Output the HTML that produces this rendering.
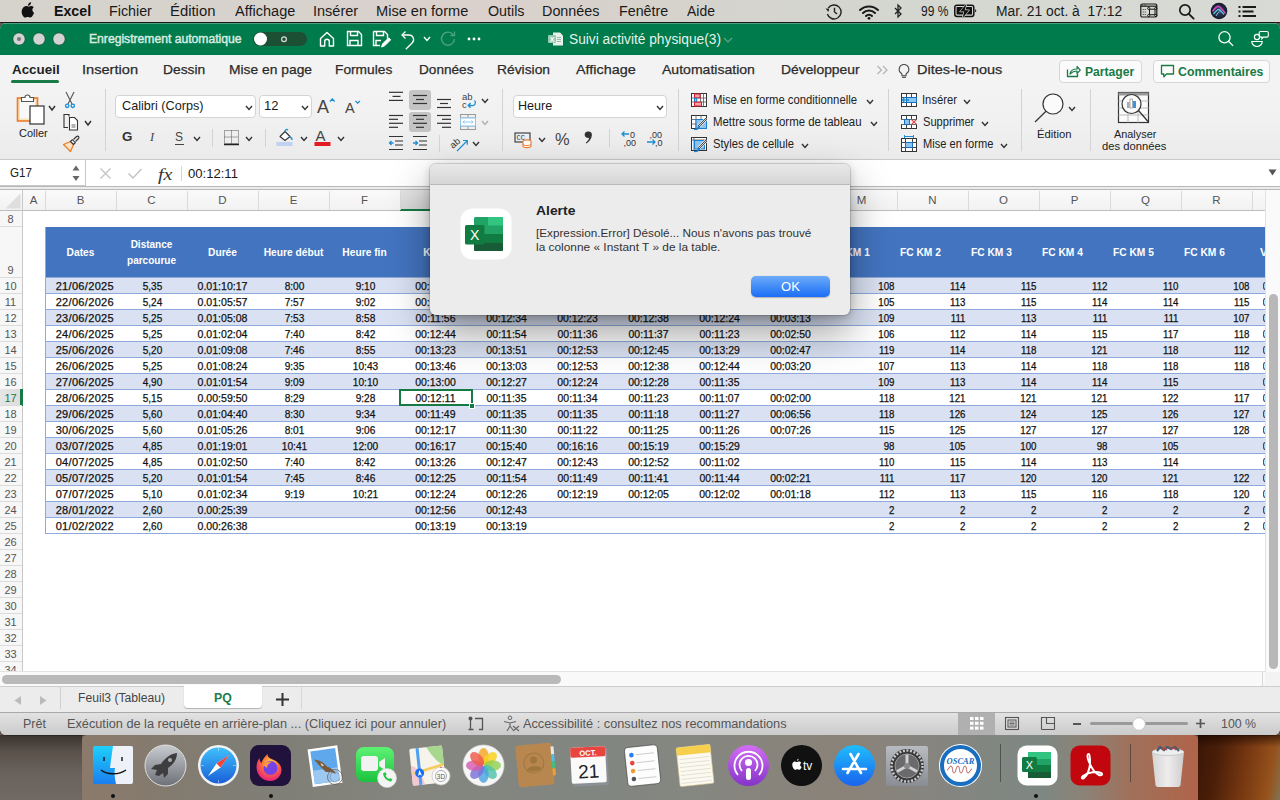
<!DOCTYPE html><html><head><meta charset="utf-8"><style>*{margin:0;padding:0;box-sizing:border-box}html,body{width:1280px;height:800px;overflow:hidden}body{position:relative;font-family:"Liberation Sans",sans-serif;background:#5a4a40}.a{position:absolute;white-space:nowrap}svg.a{overflow:visible}</style></head><body><div class="a" style="left:0px;top:0px;width:1280px;height:800px;background:#6a5a50;"></div><div class="a" style="left:0px;top:735px;width:82px;height:65px;background:linear-gradient(180deg,#3a322d 0%,#5a514b 25%,#6a625c 60%,#716963 100%);"></div><div class="a" style="left:1198px;top:735px;width:82px;height:65px;background:linear-gradient(100deg,#3a1606 0%,#4a1e08 25%,#7a3a12 60%,#95521c 85%,#8a6a40 96%,#707868 100%);"></div><div class="a" style="left:1198px;top:735px;width:82px;height:12px;background:linear-gradient(180deg,rgba(20,5,0,.6),rgba(20,5,0,0));"></div><div class="a" style="left:0px;top:0px;width:1280px;height:22px;background:linear-gradient(90deg,#d5d3cc 0%,#d8d2cd 25%,#dbd0cc 35%,#d6d2cc 50%,#d4d6d0 70%,#d8dad5 100%);"></div><div class="a" style="left:0px;top:22px;width:1280px;height:1px;background:#1e1e1e;"></div><svg class="a" style="left:21.5px;top:1.8px;" width="15" height="17" viewBox="0 0 15 17"><path fill="#111" transform="scale(.88 .92)" d="M10.3 0c.1 1.1-.3 2.1-.9 2.9-.7.8-1.7 1.3-2.6 1.2-.1-1 .4-2.1 1-2.8C8.4.6 9.5.1 10.3 0zM13.5 12.3c-.4 1-.6 1.4-1.1 2.2-.7 1.1-1.7 2.4-2.9 2.4-1.1 0-1.4-.7-2.9-.7s-1.8.7-2.9.7C2.5 16.9 1.5 15.7.8 14.6-1.1 11.6-.5 7.2 2 5.4c.9-.6 2-1 3-1 1.1 0 1.9.7 2.9.7.9 0 1.5-.7 2.9-.7.9 0 1.9.5 2.6 1.3-2.3 1.3-1.9 4.6.1 5.6z"/></svg><div class="a" id="t1" style="left:54.30px;top:3.80px;font-size:14.00px;color:#111;font-weight:700;line-height:1;transform:scaleX(1.0141);transform-origin:0 0;">Excel</div><div class="a" id="t2" style="left:108.68px;top:3.80px;font-size:14.00px;color:#1a1a1a;font-weight:400;line-height:1;transform:scaleX(1.0207);transform-origin:0 0;">Fichier</div><div class="a" id="t3" style="left:170.44px;top:3.80px;font-size:14.00px;color:#1a1a1a;font-weight:400;line-height:1;transform:scaleX(1.0604);transform-origin:0 0;">Édition</div><div class="a" id="t4" style="left:234.80px;top:3.80px;font-size:14.00px;color:#1a1a1a;font-weight:400;line-height:1;transform:scaleX(1.0371);transform-origin:0 0;">Affichage</div><div class="a" id="t5" style="left:312.96px;top:3.80px;font-size:14.00px;color:#1a1a1a;font-weight:400;line-height:1;transform:scaleX(1.0371);transform-origin:0 0;">Insérer</div><div class="a" id="t6" style="left:375.96px;top:3.80px;font-size:14.00px;color:#1a1a1a;font-weight:400;line-height:1;transform:scaleX(1.0408);transform-origin:0 0;">Mise en forme</div><div class="a" id="t7" style="left:487.50px;top:3.80px;font-size:14.00px;color:#1a1a1a;font-weight:400;line-height:1;transform:scaleX(1.0199);transform-origin:0 0;">Outils</div><div class="a" id="t8" style="left:542.47px;top:3.80px;font-size:14.00px;color:#1a1a1a;font-weight:400;line-height:1;transform:scaleX(1.0265);transform-origin:0 0;">Données</div><div class="a" id="t9" style="left:618.68px;top:3.80px;font-size:14.00px;color:#1a1a1a;font-weight:400;line-height:1;transform:scaleX(1.0177);transform-origin:0 0;">Fenêtre</div><div class="a" id="t10" style="left:687.20px;top:3.80px;font-size:14.00px;color:#1a1a1a;font-weight:400;line-height:1;transform:scaleX(0.9952);transform-origin:0 0;">Aide</div><svg class="a" style="left:824px;top:3px;" width="20" height="17" viewBox="0 0 20 17"><g fill="none" stroke="#222" stroke-width="1.4"><path d="M4.2 5.2A7 7 0 1 1 3.4 11"/><path d="M10.5 4.8v4.2l2.6 2"/></g><path d="M1.5 5.5l3.6 0.2-0.6 3.4z" fill="#222"/></svg><svg class="a" style="left:858px;top:3px;" width="22" height="17" viewBox="0 0 22 17"><g fill="none" stroke="#1a1a1a" stroke-width="2" stroke-linecap="round"><path d="M2 7a13 13 0 0 1 18 0"/><path d="M5 10a8.5 8.5 0 0 1 12 0"/><path d="M8 13a4 4 0 0 1 6 0"/></g><circle cx="11" cy="15.3" r="1.4" fill="#1a1a1a"/></svg><svg class="a" style="left:893px;top:3px;" width="11" height="17" viewBox="0 0 11 17"><path d="M2 5l6 6-3 3V2l3 3-6 6" fill="none" stroke="#222" stroke-width="1.3"/></svg><div class="a" id="t11" style="left:921.00px;top:3.80px;font-size:14.00px;color:#1a1a1a;font-weight:400;line-height:1;transform:scaleX(0.8582);transform-origin:0 0;">99 %</div><svg class="a" style="left:953px;top:3px;" width="26" height="16" viewBox="0 0 26 16"><rect x="1.8" y="2.2" width="19" height="11.2" rx="2.2" fill="none" stroke="#111" stroke-width="1.5"/><path d="M22.2 6.3a1.6 1.6 0 0 1 0 3z" fill="#111"/><rect x="3.6" y="4" width="15.4" height="7.6" rx=".6" fill="#111"/><path d="M13.6 .8L7 8.6h4.3L9.4 15.2l6.6-8H11.7z" fill="#111" stroke="#d4d6d0" stroke-width="1.3" stroke-linejoin="round"/><path d="M13.6 .8L7 8.6h4.3L9.4 15.2l6.6-8H11.7z" fill="#111"/></svg><div class="a" id="t12" style="left:995.61px;top:3.80px;font-size:14.00px;color:#1a1a1a;font-weight:400;line-height:1;transform:scaleX(0.9878);transform-origin:0 0;white-space:pre;">Mar. 21 oct. à  17:12</div><svg class="a" style="left:1140px;top:3px;" width="18" height="15" viewBox="0 0 18 15"><rect x=".8" y="1" width="16" height="13" rx="1.5" fill="none" stroke="#1a1a1a" stroke-width="1.2"/><path d="M.8 3.2h16" stroke="#1a1a1a" stroke-width="1.2"/><g fill="#1a1a1a"><circle cx="2.6" cy="2.1" r=".5"/><circle cx="4.2" cy="2.1" r=".5"/><circle cx="5.8" cy="2.1" r=".5"/><circle cx="3.2" cy="6.5" r=".6"/><circle cx="5.2" cy="6.5" r=".6"/><circle cx="3.2" cy="9" r=".6"/><circle cx="5.2" cy="9" r=".6"/><circle cx="3.2" cy="11.5" r=".6"/><circle cx="5.2" cy="11.5" r=".6"/></g><path d="M9.5 6.2h5.5v5.5H9.5zM9.5 6.2a1.2 1.2 0 1 1 0 0M15 6.2a1.2 1.2 0 1 1 0 0" fill="none" stroke="#1a1a1a" stroke-width="1"/><circle cx="8.7" cy="5.4" r="1.1" fill="none" stroke="#1a1a1a" stroke-width="1"/><circle cx="15.8" cy="5.4" r="1.1" fill="none" stroke="#1a1a1a" stroke-width="1"/><circle cx="8.7" cy="12.5" r="1.1" fill="none" stroke="#1a1a1a" stroke-width="1"/><circle cx="15.8" cy="12.5" r="1.1" fill="none" stroke="#1a1a1a" stroke-width="1"/></svg><svg class="a" style="left:1178px;top:3px;" width="17" height="17" viewBox="0 0 17 17"><circle cx="7" cy="7" r="5.2" fill="none" stroke="#1a1a1a" stroke-width="1.7"/><path d="M10.8 10.8l4.8 4.8" stroke="#1a1a1a" stroke-width="1.9" stroke-linecap="round"/></svg><svg class="a" style="left:1210px;top:2px;" width="18" height="18" viewBox="0 0 18 18"><defs><radialGradient id="sg" cx="50%" cy="50%" r="55%"><stop offset="0" stop-color="#3a4a7a"/><stop offset=".7" stop-color="#1c2238"/><stop offset="1" stop-color="#0c0e18"/></radialGradient></defs><circle cx="9" cy="9" r="8.3" fill="url(#sg)"/><path d="M2.5 9.5C5 6 7.5 4 9 4.5s3 3 6.5 7" fill="none" stroke="#e04cc8" stroke-width="1.6" opacity=".9"/><path d="M3.5 12C6 9 7.8 7 9 7.5s2.5 2.5 5 5" fill="none" stroke="#5be0e8" stroke-width="1.4" opacity=".9"/><path d="M6 14c1.5-3 2.5-4 3.5-4" fill="none" stroke="#a0f0ff" stroke-width="1" opacity=".8"/></svg><svg class="a" style="left:1238px;top:5px;" width="20" height="13" viewBox="0 0 20 13"><g fill="#1a1a1a"><rect x=".5" y="1" width="2" height="2"/><rect x=".5" y="5.5" width="2" height="2"/><rect x=".5" y="10" width="2" height="2"/><rect x="4.5" y="1" width="13.5" height="2"/><rect x="4.5" y="5.5" width="11" height="2"/><rect x="4.5" y="10" width="13.5" height="2"/></g></svg><div class="a" style="left:0;top:23px;width:1280px;height:711.5px;background:#f3f3f3;border-radius:6px 6px 6px 6px;overflow:hidden;box-shadow:0 0 0 0.5px rgba(0,0,0,.5)"><div class="a" style="left:0px;top:0px;width:1280px;height:32px;background:#007b4b;"></div><div class="a" style="left:0px;top:0px;width:1280px;height:1px;background:rgba(255,255,255,.3);"></div></div><svg class="a" style="left:12px;top:31.75px;" width="14" height="14" viewBox="0 0 14 14"><circle cx="7" cy="7" r="6" fill="#d3d3d3" stroke="rgba(0,0,0,.35)" stroke-width=".8"/></svg><svg class="a" style="left:32px;top:31.75px;" width="14" height="14" viewBox="0 0 14 14"><circle cx="7" cy="7" r="6" fill="#d3d3d3" stroke="rgba(0,0,0,.35)" stroke-width=".8"/></svg><svg class="a" style="left:52px;top:31.75px;" width="14" height="14" viewBox="0 0 14 14"><circle cx="7" cy="7" r="6" fill="#d3d3d3" stroke="rgba(0,0,0,.35)" stroke-width=".8"/></svg><svg class="a" style="left:12px;top:31.75px;" width="14" height="14" viewBox="0 0 14 14"><circle cx="7" cy="7" r="2" fill="#777"/></svg><div class="a" id="t13" style="left:89.33px;top:32.67px;font-size:12.50px;color:#d9ebe1;font-weight:400;line-height:1;transform:scaleX(0.9713);transform-origin:0 0;-webkit-text-stroke:0.45px #d9ebe1;">Enregistrement automatique</div><div class="a" style="left:253px;top:32px;width:54px;height:14px;background:#1d4f35;border-radius:7px;"></div><svg class="a" style="left:253px;top:32px;" width="16" height="14" viewBox="0 0 16 14"><circle cx="7.5" cy="7" r="6.5" fill="#fff"/></svg><svg class="a" style="left:280px;top:35px;" width="10" height="9" viewBox="0 0 10 9"><ellipse cx="4" cy="4.2" rx="2.4" ry="2.4" fill="none" stroke="#ddd" stroke-width="1.2"/></svg><svg class="a" style="left:318px;top:30px;" width="18" height="18" viewBox="0 0 18 18"><path d="M2.5 8.5L9 2.5l6.5 6v7.5h-4.2v-4.5a2.3 2.3 0 0 0-4.6 0V16H2.5z" fill="none" stroke="#ffffff" stroke-width="1.4" stroke-linejoin="round"/></svg><svg class="a" style="left:346px;top:30px;" width="17" height="17" viewBox="0 0 17 17"><path d="M1.5 1.5h11l3 3v11h-14z" fill="none" stroke="#ffffff" stroke-width="1.4"/><path d="M4.5 1.5v4h7v-4M4 15.5v-5h8v5" fill="none" stroke="#ffffff" stroke-width="1.4"/></svg><svg class="a" style="left:372px;top:30px;" width="19" height="18" viewBox="0 0 19 18"><path d="M1.5 1.5h11l3 3v4M8 15.5H1.5v-14" fill="none" stroke="#ffffff" stroke-width="1.4"/><path d="M4.5 1.5v4h7v-4M4 15.5v-5h5" fill="none" stroke="#ffffff" stroke-width="1.4"/><path d="M9.5 17l1.2-3.2 6-6 2 2-6 6z" fill="#ffffff" stroke="#ffffff" stroke-width="1"/></svg><svg class="a" style="left:400px;top:30px;" width="17" height="20" viewBox="0 0 17 20"><path d="M5.5 1.5L2 5l3.5 3.5" fill="none" stroke="#ffffff" stroke-width="1.3"/><path d="M2 5h7a4.6 4.6 0 0 1 3.3 7.8L5.8 19.3" fill="none" stroke="#ffffff" stroke-width="1.3"/></svg><svg class="a" style="left:423px;top:36px;" width="8" height="5.5" viewBox="0 0 8 5.5"><path d="M1 1l3.0 3.5 3.0 -3.5" fill="none" stroke="#fff" stroke-width="1.3"/></svg><svg class="a" style="left:439px;top:30px;" width="18" height="18" viewBox="0 0 18 18"><path d="M14 4.5A6.5 6.5 0 1 0 15.5 9" fill="none" stroke="rgba(255,255,255,.3)" stroke-width="1.4"/><path d="M15.5 1.5v4h-4" fill="none" stroke="rgba(255,255,255,.3)" stroke-width="1.4"/></svg><svg class="a" style="left:467px;top:37px;" width="14" height="4" viewBox="0 0 14 4"><circle cx="2" cy="2" r="1.4" fill="#fff"/><circle cx="7" cy="2" r="1.4" fill="#fff"/><circle cx="12" cy="2" r="1.4" fill="#fff"/></svg><svg class="a" style="left:548px;top:32px;" width="16" height="14" viewBox="0 0 16 14"><path d="M5 .5h7l3 3v10H5z" fill="#e8f2ec"/><rect x="0" y="3" width="8" height="8" rx="1" fill="#9cc8ad"/><text x="4" y="9.5" font-size="7" font-family="Liberation Sans" font-weight="700" fill="#fff" text-anchor="middle">X</text><path d="M9 5.5h4M9 7.5h4M9 9.5h4" stroke="#8fb8a0" stroke-width=".9"/></svg><div class="a" id="t14" style="left:568.50px;top:32.20px;font-size:14.00px;color:#e6f1ea;font-weight:400;line-height:1;transform:scaleX(0.9819);transform-origin:0 0;">Suivi activité physique(3)</div><svg class="a" style="left:723px;top:37px;" width="10" height="6" viewBox="0 0 10 6"><path d="M1 1l4.0 4 4.0 -4" fill="none" stroke="rgba(255,255,255,.35)" stroke-width="1.2"/></svg><svg class="a" style="left:1216px;top:29px;" width="20" height="20" viewBox="0 0 20 20"><circle cx="8.5" cy="8.3" r="5.6" fill="none" stroke="#fff" stroke-width="1.3"/><path d="M12.5 12.3l4.6 4.6" stroke="#fff" stroke-width="1.3"/></svg><svg class="a" style="left:1249px;top:29px;" width="22" height="20" viewBox="0 0 22 20"><circle cx="8" cy="8" r="2.6" fill="none" stroke="#fff" stroke-width="1.2"/><path d="M2.8 12.5h10.4a5.2 5 0 0 1-10.4 0z" fill="none" stroke="#fff" stroke-width="1.2"/><path d="M11.5 2.5h6.5a1.3 1.3 0 0 1 1.3 1.3v3a1.3 1.3 0 0 1-1.3 1.3h-3.5l-1.7 1.6.2-1.6h-1.5a1.3 1.3 0 0 1-1.3-1.3v-3a1.3 1.3 0 0 1 1.3-1.3z" fill="none" stroke="#fff" stroke-width="1.1"/></svg><div class="a" id="t15" style="left:11.60px;top:62.52px;font-size:13.50px;color:#222;font-weight:700;line-height:1;transform:scaleX(0.9922);transform-origin:0 0;">Accueil</div><div class="a" id="t16" style="left:81.92px;top:62.52px;font-size:13.50px;color:#2b2b2b;font-weight:400;line-height:1;transform:scaleX(1.0821);transform-origin:0 0;-webkit-text-stroke:0.25px #2b2b2b;">Insertion</div><div class="a" id="t17" style="left:162.68px;top:62.52px;font-size:13.50px;color:#2b2b2b;font-weight:400;line-height:1;transform:scaleX(1.0237);transform-origin:0 0;-webkit-text-stroke:0.25px #2b2b2b;">Dessin</div><div class="a" id="t18" style="left:228.68px;top:62.52px;font-size:13.50px;color:#2b2b2b;font-weight:400;line-height:1;transform:scaleX(1.0246);transform-origin:0 0;-webkit-text-stroke:0.25px #2b2b2b;">Mise en page</div><div class="a" id="t19" style="left:335.48px;top:62.52px;font-size:13.50px;color:#2b2b2b;font-weight:400;line-height:1;transform:scaleX(1.0178);transform-origin:0 0;-webkit-text-stroke:0.25px #2b2b2b;">Formules</div><div class="a" id="t20" style="left:418.59px;top:62.52px;font-size:13.50px;color:#2b2b2b;font-weight:400;line-height:1;transform:scaleX(1.0077);transform-origin:0 0;-webkit-text-stroke:0.25px #2b2b2b;">Données</div><div class="a" id="t21" style="left:497.48px;top:62.52px;font-size:13.50px;color:#2b2b2b;font-weight:400;line-height:1;transform:scaleX(1.0246);transform-origin:0 0;-webkit-text-stroke:0.25px #2b2b2b;">Révision</div><div class="a" id="t22" style="left:575.50px;top:62.52px;font-size:13.50px;color:#2b2b2b;font-weight:400;line-height:1;transform:scaleX(1.0660);transform-origin:0 0;-webkit-text-stroke:0.25px #2b2b2b;">Affichage</div><div class="a" id="t23" style="left:661.60px;top:62.52px;font-size:13.50px;color:#2b2b2b;font-weight:400;line-height:1;transform:scaleX(1.0406);transform-origin:0 0;-webkit-text-stroke:0.25px #2b2b2b;">Automatisation</div><div class="a" id="t24" style="left:781.17px;top:62.52px;font-size:13.50px;color:#2b2b2b;font-weight:400;line-height:1;transform:scaleX(1.0269);transform-origin:0 0;-webkit-text-stroke:0.25px #2b2b2b;">Développeur</div><div class="a" id="t25" style="left:916.93px;top:62.52px;font-size:13.50px;color:#2b2b2b;font-weight:400;line-height:1;transform:scaleX(1.0726);transform-origin:0 0;-webkit-text-stroke:0.25px #2b2b2b;">Dites-le-nous</div><div class="a" style="left:11px;top:80px;width:48px;height:3px;background:#187a44;border-radius:2px;"></div><svg class="a" style="left:876px;top:65px;" width="14" height="10" viewBox="0 0 14 10"><path d="M1.5 1l4 4-4 4M7 1l4 4-4 4" fill="none" stroke="#b5b5b5" stroke-width="1.3"/></svg><svg class="a" style="left:897px;top:63px;" width="14" height="16" viewBox="0 0 14 16"><path d="M7 1.5a4.8 4.8 0 0 0-2.8 8.7c.5.4.8 1 .8 1.6v1h4v-1c0-.6.3-1.2.8-1.6A4.8 4.8 0 0 0 7 1.5z" fill="none" stroke="#444" stroke-width="1.1"/><path d="M5 14.3h4" stroke="#444" stroke-width="1.1"/></svg><div class="a" style="left:1058.5px;top:59.5px;width:83px;height:23px;background:#fbfbfb;border:1px solid #d6d6d6;border-radius:4px;"></div><svg class="a" style="left:1066px;top:64px;" width="15" height="14" viewBox="0 0 15 14"><path d="M1.5 5.5v7h10v-2.5" fill="none" stroke="#187a44" stroke-width="1.3"/><path d="M4 10c.5-3.5 3-5 7-5V2.5l3.3 3.6L11 9.5V7c-3 0-5 1-7 3z" fill="none" stroke="#187a44" stroke-width="1.2" stroke-linejoin="round"/></svg><div class="a" id="t26" style="left:1084.70px;top:64.53px;font-size:13.50px;color:#187a44;font-weight:700;line-height:1;transform:scaleX(0.8987);transform-origin:0 0;">Partager</div><div class="a" style="left:1152.5px;top:59.5px;width:117px;height:23px;background:#fbfbfb;border:1px solid #d6d6d6;border-radius:4px;"></div><svg class="a" style="left:1160px;top:64px;" width="15" height="14" viewBox="0 0 15 14"><path d="M1.5 1.5h12v8.5H6.5L3.8 12.8V10H1.5z" fill="none" stroke="#187a44" stroke-width="1.3" stroke-linejoin="round"/></svg><div class="a" id="t27" style="left:1178.00px;top:64.53px;font-size:13.50px;color:#187a44;font-weight:700;line-height:1;transform:scaleX(0.9113);transform-origin:0 0;">Commentaires</div><div class="a" style="left:0px;top:88px;width:1280px;height:71px;background:linear-gradient(#f3f3f3,#f1f1f1 40%,#ebebeb);"></div><div class="a" style="left:0px;top:159px;width:1280px;height:1px;background:#c9c9c9;"></div><div class="a" style="left:104.5px;top:89px;width:1px;height:62px;background:#d3d3d3;"></div><div class="a" style="left:501.5px;top:89px;width:1px;height:62px;background:#d3d3d3;"></div><div class="a" style="left:677.5px;top:89px;width:1px;height:62px;background:#d3d3d3;"></div><div class="a" style="left:887.5px;top:89px;width:1px;height:62px;background:#d3d3d3;"></div><div class="a" style="left:1020.5px;top:89px;width:1px;height:62px;background:#d3d3d3;"></div><div class="a" style="left:1089.5px;top:89px;width:1px;height:62px;background:#d3d3d3;"></div><svg class="a" style="left:14px;top:92px;" width="44" height="34" viewBox="0 0 44 34"><rect x="3.5" y="6" width="20" height="23" fill="#fbe3b8" stroke="#ee7b2a" stroke-width="1.6"/><rect x="6" y="8.5" width="15" height="18" fill="#f8f8f8"/><path d="M7.5 9.5v-4h3.5a2.5 2.5 0 0 1 5 0h3.5v4z" fill="#fff" stroke="#555" stroke-width="1.1"/><rect x="16" y="14" width="14" height="18" fill="#fff" stroke="#333" stroke-width="1.2"/></svg><svg class="a" style="left:48px;top:105px;" width="8" height="6" viewBox="0 0 8 6"><path d="M1 1l3.0 4 3.0 -4" fill="none" stroke="#333" stroke-width="1.5"/></svg><div class="a" id="t28" style="left:19.20px;top:128.12px;font-size:11.50px;color:#222;font-weight:400;line-height:1;transform:scaleX(0.9534);transform-origin:0 0;">Coller</div><svg class="a" style="left:63px;top:91px;" width="14" height="18" viewBox="0 0 14 18"><path d="M3 1l6 12M11 1L5 13" stroke="#555" stroke-width="1.1"/><circle cx="4.2" cy="14.8" r="1.7" fill="none" stroke="#1a8fd6" stroke-width="1.3"/><circle cx="9.8" cy="14.8" r="1.7" fill="none" stroke="#1a8fd6" stroke-width="1.3"/></svg><svg class="a" style="left:62px;top:113px;" width="18" height="18" viewBox="0 0 18 18"><path d="M7 3.5V1.5H2v13h4" fill="none" stroke="#333" stroke-width="1.1"/><path d="M7.5 4.5h5l3 3v9.5h-8z" fill="#fff" stroke="#333" stroke-width="1.1"/><path d="M9.5 12h4M9.5 14h4" stroke="#555" stroke-width=".9"/></svg><svg class="a" style="left:84px;top:120px;" width="8" height="6" viewBox="0 0 8 6"><path d="M1 1l3.0 4 3.0 -4" fill="none" stroke="#333" stroke-width="1.5"/></svg><svg class="a" style="left:62px;top:135px;" width="18" height="17" viewBox="0 0 18 17"><path d="M1.5 9.5l7-3 3 3-3 7z" fill="#fde4c2" stroke="#ee7b2a" stroke-width="1.3" stroke-linejoin="round"/><path d="M8.5 6.5l1.8-1.8 3 3-1.8 1.8z" fill="#fff" stroke="#333" stroke-width="1.1"/><path d="M11.5 4.5l3-3a1.3 1.3 0 0 1 2 2l-3 3" fill="none" stroke="#333" stroke-width="1.1"/></svg><div class="a" style="left:115px;top:94.5px;width:140.5px;height:23px;background:#fff;border:1px solid #d4d4d4;border-radius:4px;"></div><div class="a" id="t29" style="left:121.50px;top:99.25px;font-size:13.00px;color:#1a1a1a;font-weight:400;line-height:1;transform:scaleX(0.9729);transform-origin:0 0;">Calibri (Corps)</div><svg class="a" style="left:245px;top:104.5px;" width="8" height="5.5" viewBox="0 0 8 5.5"><path d="M1 1l3.0 3.5 3.0 -3.5" fill="none" stroke="#333" stroke-width="1.4"/></svg><div class="a" style="left:258.5px;top:94.5px;width:53px;height:23px;background:#fff;border:1px solid #d4d4d4;border-radius:4px;"></div><div class="a" id="t30" style="left:264.00px;top:99.25px;font-size:13.00px;color:#1a1a1a;font-weight:400;line-height:1;">12</div><svg class="a" style="left:301px;top:104.5px;" width="8" height="5.5" viewBox="0 0 8 5.5"><path d="M1 1l3.0 3.5 3.0 -3.5" fill="none" stroke="#333" stroke-width="1.4"/></svg><svg class="a" style="left:317px;top:96px;" width="20" height="18" viewBox="0 0 20 18"><text x="0" y="16.5" font-size="18" font-family="Liberation Sans" fill="#444">A</text><path d="M13 5.5l2.3-2.5 2.3 2.5" fill="none" stroke="#1a8fd6" stroke-width="1.3"/></svg><svg class="a" style="left:345px;top:98px;" width="18" height="16" viewBox="0 0 18 16"><text x="0" y="14.5" font-size="14.5" font-family="Liberation Sans" fill="#444">A</text><path d="M10.5 3l2.2 2.2 2.2-2.2" fill="none" stroke="#1a8fd6" stroke-width="1.3"/></svg><div class="a" id="t31" style="left:121.50px;top:131.18px;font-size:12.50px;color:#333;font-weight:700;line-height:1;transform:scaleX(1.0667);transform-origin:0 0;">G</div><div class="a" id="t32" style="left:150.00px;top:131.18px;font-size:12.50px;color:#444;font-weight:400;line-height:1;transform:scaleX(1.0000);transform-origin:0 0;font-family:'Liberation Serif',serif;font-style:italic;">I</div><div class="a" id="t33" style="left:175.00px;top:131.30px;font-size:12.00px;color:#444;font-weight:400;line-height:1;transform:scaleX(1.0000);transform-origin:0 0;">S</div><div class="a" style="left:175px;top:144px;width:9px;height:1px;background:#444;"></div><svg class="a" style="left:193px;top:136px;" width="8" height="5.5" viewBox="0 0 8 5.5"><path d="M1 1l3.0 3.5 3.0 -3.5" fill="none" stroke="#333" stroke-width="1.4"/></svg><div class="a" style="left:211.5px;top:129px;width:1px;height:18px;background:#d3d3d3;"></div><svg class="a" style="left:223px;top:129px;" width="17" height="17" viewBox="0 0 17 17"><g stroke="#555" stroke-width="1" stroke-dasharray="1 1" fill="none"><rect x="1.5" y="1.5" width="14" height="13"/><path d="M8.5 1.5v13M1.5 8h14"/></g><path d="M1 15.5h15" stroke="#222" stroke-width="1.5"/></svg><svg class="a" style="left:245px;top:136px;" width="8" height="5.5" viewBox="0 0 8 5.5"><path d="M1 1l3.0 3.5 3.0 -3.5" fill="none" stroke="#333" stroke-width="1.4"/></svg><div class="a" style="left:264.5px;top:129px;width:1px;height:18px;background:#d3d3d3;"></div><svg class="a" style="left:276px;top:128px;" width="18" height="19" viewBox="0 0 18 19"><path d="M4 8.5l5-5 5 5-5 4z" fill="#fff" stroke="#333" stroke-width="1.1" stroke-linejoin="round"/><path d="M9 3.5c0-2 2-2.5 3-1.5M13 9c2 0 3 1 3 3" fill="none" stroke="#1a8fd6" stroke-width="1.3"/><rect x="0.5" y="14" width="16" height="4" fill="#c0d2f3"/></svg><svg class="a" style="left:300px;top:136px;" width="8" height="5.5" viewBox="0 0 8 5.5"><path d="M1 1l3.0 3.5 3.0 -3.5" fill="none" stroke="#333" stroke-width="1.4"/></svg><svg class="a" style="left:314px;top:128px;" width="18" height="19" viewBox="0 0 18 19"><text x="1.5" y="12.8" font-size="15" font-family="Liberation Sans" fill="#444">A</text><rect x="0.5" y="14" width="16" height="4" fill="#e51b24"/></svg><svg class="a" style="left:337px;top:136px;" width="8" height="5.5" viewBox="0 0 8 5.5"><path d="M1 1l3.0 3.5 3.0 -3.5" fill="none" stroke="#333" stroke-width="1.4"/></svg><div class="a" style="left:409px;top:90px;width:22px;height:19.5px;background:#c4c4c4;border-radius:3px;"></div><div class="a" style="left:409px;top:112px;width:22px;height:20px;background:#c4c4c4;border-radius:3px;"></div><svg class="a" style="left:388px;top:88px;" width="16" height="46" viewBox="0 0 16 46"><path d="M1 4.3 H15" stroke="#333" stroke-width="1.2"/><path d="M4.5 8.4 H12.5" stroke="#333" stroke-width="1.2"/><path d="M1 12.4 H15" stroke="#333" stroke-width="1.2"/></svg><svg class="a" style="left:412px;top:88px;" width="16" height="46" viewBox="0 0 16 46"><path d="M1 7.5 H15" stroke="#333" stroke-width="1.2"/><path d="M4 11.5 H12" stroke="#333" stroke-width="1.2"/><path d="M1 15.5 H15" stroke="#333" stroke-width="1.2"/></svg><svg class="a" style="left:436px;top:88px;" width="16" height="46" viewBox="0 0 16 46"><path d="M1 11.5 H15" stroke="#333" stroke-width="1.2"/><path d="M4 15.5 H12" stroke="#333" stroke-width="1.2"/><path d="M1 19.5 H15" stroke="#333" stroke-width="1.2"/></svg><svg class="a" style="left:388px;top:88px;" width="16" height="46" viewBox="0 0 16 46"><path d="M1 27.5 H15" stroke="#333" stroke-width="1.2"/><path d="M1 31.3 H10" stroke="#333" stroke-width="1.2"/><path d="M1 35.3 H15" stroke="#333" stroke-width="1.2"/><path d="M1 39.3 H10" stroke="#333" stroke-width="1.2"/></svg><svg class="a" style="left:412px;top:88px;" width="16" height="46" viewBox="0 0 16 46"><path d="M1 27.5 H15" stroke="#333" stroke-width="1.2"/><path d="M4 31.3 H12" stroke="#333" stroke-width="1.2"/><path d="M1 35.3 H15" stroke="#333" stroke-width="1.2"/><path d="M4 39.3 H12" stroke="#333" stroke-width="1.2"/></svg><svg class="a" style="left:436px;top:88px;" width="16" height="46" viewBox="0 0 16 46"><path d="M1 27.5 H15" stroke="#333" stroke-width="1.2"/><path d="M6 31.3 H15" stroke="#333" stroke-width="1.2"/><path d="M1 35.3 H15" stroke="#333" stroke-width="1.2"/><path d="M6 39.3 H15" stroke="#333" stroke-width="1.2"/></svg><svg class="a" style="left:461px;top:92px;" width="18" height="18" viewBox="0 0 18 18"><text x="1" y="8" font-size="9.5" font-family="Liberation Sans" fill="#444">ab</text><text x="1" y="15.5" font-size="9.5" font-family="Liberation Sans" fill="#444">c</text><path d="M13.5 8.5a3 3 0 0 1-3 5H7.5M9.5 11l-2.3 2.5 2.3 2.3" fill="none" stroke="#1a8fd6" stroke-width="1.3"/></svg><svg class="a" style="left:481px;top:98px;" width="8" height="5.5" viewBox="0 0 8 5.5"><path d="M1 1l3.0 3.5 3.0 -3.5" fill="none" stroke="#333" stroke-width="1.4"/></svg><svg class="a" style="left:459px;top:113px;" width="18" height="18" viewBox="0 0 18 18"><rect x="1.5" y="1.5" width="15" height="15" fill="none" stroke="#999" stroke-width="1"/><path d="M1.5 5h15M1.5 13h15M9 1.5v3.5M9 13v3.5" stroke="#999" stroke-width="1"/><rect x="1.5" y="5" width="15" height="8" fill="#fff" stroke="#8cc8ee" stroke-width="1"/><path d="M4 9h10M5.5 7.5L4 9l1.5 1.5M12.5 7.5L14 9l-1.5 1.5" fill="none" stroke="#8cc8ee" stroke-width="1"/></svg><svg class="a" style="left:481px;top:120px;" width="8" height="5.5" viewBox="0 0 8 5.5"><path d="M1 1l3.0 3.5 3.0 -3.5" fill="none" stroke="#b0b0b0" stroke-width="1.4"/></svg><svg class="a" style="left:388px;top:135px;" width="16" height="17" viewBox="0 0 16 17"><path d="M1 1.5h14M7 6h8M7 10h8M1 14.5h14" stroke="#333" stroke-width="1.2"/><path d="M5.5 8H1.5M3.5 6L1.5 8l2 2" fill="none" stroke="#1a8fd6" stroke-width="1.3"/></svg><svg class="a" style="left:412px;top:135px;" width="16" height="17" viewBox="0 0 16 17"><path d="M1 1.5h14M7 6h8M7 10h8M1 14.5h14" stroke="#333" stroke-width="1.2"/><path d="M1 8h4.5M3.5 6l2 2-2 2" fill="none" stroke="#1a8fd6" stroke-width="1.3"/></svg><div class="a" style="left:439px;top:135px;width:1px;height:17px;background:#d3d3d3;"></div><svg class="a" style="left:450px;top:135px;" width="19" height="17" viewBox="0 0 19 17"><text x="0" y="0" font-size="9.5" font-family="Liberation Sans" fill="#333" transform="translate(3 14) rotate(-40)">ab</text><path d="M7 16L17 6M13 5.5h4.3v4.3" fill="none" stroke="#1a8fd6" stroke-width="1.2"/></svg><svg class="a" style="left:472px;top:141px;" width="8" height="5.5" viewBox="0 0 8 5.5"><path d="M1 1l3.0 3.5 3.0 -3.5" fill="none" stroke="#333" stroke-width="1.4"/></svg><div class="a" style="left:512.5px;top:94.5px;width:154px;height:23px;background:#fff;border:1px solid #d4d4d4;border-radius:4px;"></div><div class="a" id="t34" style="left:517.53px;top:99.25px;font-size:13.00px;color:#1a1a1a;font-weight:400;line-height:1;transform:scaleX(0.9656);transform-origin:0 0;">Heure</div><svg class="a" style="left:656px;top:104.5px;" width="8" height="5.5" viewBox="0 0 8 5.5"><path d="M1 1l3.0 3.5 3.0 -3.5" fill="none" stroke="#333" stroke-width="1.4"/></svg><svg class="a" style="left:514px;top:132px;" width="20" height="16" viewBox="0 0 20 16"><rect x="1" y="1" width="15" height="9" fill="none" stroke="#333" stroke-width="1.1"/><text x="2.5" y="8.3" font-size="7" font-family="Liberation Mono" fill="#333">CC</text><ellipse cx="13" cy="9.5" rx="4" ry="1.6" fill="#fff" stroke="#ee7b2a" stroke-width="1.1"/><path d="M9 9.5v4.5c0 .9 1.8 1.6 4 1.6s4-.7 4-1.6V9.5" fill="#fff" stroke="#ee7b2a" stroke-width="1.1"/><path d="M9 12c0 .9 1.8 1.6 4 1.6s4-.7 4-1.6" fill="none" stroke="#ee7b2a" stroke-width="1"/></svg><svg class="a" style="left:538px;top:136.5px;" width="8" height="5.5" viewBox="0 0 8 5.5"><path d="M1 1l3.0 3.5 3.0 -3.5" fill="none" stroke="#333" stroke-width="1.4"/></svg><div class="a" id="t35" style="left:554.50px;top:130.55px;font-size:17.00px;color:#444;font-weight:400;line-height:1;transform:scaleX(0.9667);transform-origin:0 0;">%</div><svg class="a" style="left:583px;top:130px;" width="12" height="17" viewBox="0 0 12 17"><path d="M5.5 1.5a3.3 3.3 0 0 1 3.4 3.8c-.3 3.6-2.6 6.6-5.6 8.2l-.6-.8c2-1.4 3.2-3.1 3.5-4.9A3.3 3.3 0 1 1 5.5 1.5z" fill="#333"/></svg><div class="a" style="left:608.5px;top:129px;width:1px;height:18px;background:#d3d3d3;"></div><svg class="a" style="left:620px;top:129px;" width="18" height="18" viewBox="0 0 18 18"><path d="M9 5H2M4.5 2.5L2 5l2.5 2.5" fill="none" stroke="#1a8fd6" stroke-width="1.3"/><text x="10" y="8.5" font-size="9" font-family="Liberation Sans" fill="#333">0</text><text x="3.5" y="16.5" font-size="9" font-family="Liberation Sans" fill="#333">,00</text></svg><svg class="a" style="left:646px;top:129px;" width="18" height="18" viewBox="0 0 18 18"><text x="3.5" y="8.5" font-size="9" font-family="Liberation Sans" fill="#333">,00</text><path d="M1 13h8M6.5 10.5L9 13l-2.5 2.5" fill="none" stroke="#1a8fd6" stroke-width="1.3"/><text x="9" y="16.5" font-size="9" font-family="Liberation Sans" fill="#333">,0</text></svg><svg class="a" style="left:690px;top:92px;" width="18" height="16" viewBox="0 0 18 16"><rect x="1.5" y="1.5" width="15" height="13" fill="#fff" stroke="#333" stroke-width="1"/><path d="M4.5 1.5v13M10.5 1.5v13M13.5 1.5v13M1.5 6h15M1.5 10h15" stroke="#555" stroke-width=".8"/><rect x="4.5" y="2" width="5.5" height="3.8" fill="#f4a0a8" stroke="#e0202c" stroke-width="1"/><rect x="4.5" y="6.2" width="2.2" height="3.6" fill="#8cc4f0" stroke="#1a7fd0" stroke-width="1"/><rect x="4.5" y="10.2" width="7" height="3.8" fill="#f4a0a8" stroke="#e0202c" stroke-width="1"/></svg><svg class="a" style="left:690px;top:114px;" width="18" height="17" viewBox="0 0 18 17"><rect x="1.5" y="1.5" width="15" height="13" fill="#fff" stroke="#333" stroke-width="1"/><path d="M6 1.5v13M11 1.5v13M1.5 5.5h15M1.5 10h15" stroke="#555" stroke-width=".8"/><rect x="6" y="5.5" width="10.5" height="9" fill="#8cc4f0" stroke="#1a7fd0" stroke-width="1"/><path d="M8.5 12.5L16.5 4.5" stroke="#fff" stroke-width="3.2"/><path d="M8.5 12.5L16.5 4.5" stroke="#333" stroke-width="2" /><path d="M8.6 12.4L16.4 4.6" stroke="#fff" stroke-width=".8"/><path d="M4 15.5c2 0 3.5-.5 4.5-3l1 1c-1 2-3 2.5-5.5 2z" fill="#1a7fd0" stroke="#1a7fd0" stroke-width=".8"/></svg><svg class="a" style="left:690px;top:136px;" width="18" height="17" viewBox="0 0 18 17"><rect x="1.5" y="1.5" width="15" height="13" fill="#fff" stroke="#333" stroke-width="1"/><path d="M4 1.5v13M1.5 4h15" stroke="#555" stroke-width=".8"/><rect x="4.5" y="4.5" width="10" height="8.5" fill="#8cc4f0" stroke="#1a7fd0" stroke-width="1"/><path d="M8.5 12.5L16.5 4.5" stroke="#fff" stroke-width="3.2"/><path d="M8.5 12.5L16.5 4.5" stroke="#333" stroke-width="2"/><path d="M8.6 12.4L16.4 4.6" stroke="#fff" stroke-width=".8"/><path d="M4 15.5c2 0 3.5-.5 4.5-3l1 1c-1 2-3 2.5-5.5 2z" fill="#1a7fd0" stroke="#1a7fd0" stroke-width=".8"/></svg><div class="a" id="t36" style="left:713.40px;top:93.80px;font-size:12.00px;color:#222;font-weight:400;line-height:1;transform:scaleX(0.9427);transform-origin:0 0;">Mise en forme conditionnelle</div><svg class="a" style="left:866px;top:99px;" width="8" height="5.5" viewBox="0 0 8 5.5"><path d="M1 1l3.0 3.5 3.0 -3.5" fill="none" stroke="#333" stroke-width="1.4"/></svg><div class="a" id="t37" style="left:713.40px;top:115.80px;font-size:12.00px;color:#222;font-weight:400;line-height:1;transform:scaleX(0.9517);transform-origin:0 0;">Mettre sous forme de tableau</div><svg class="a" style="left:870px;top:121px;" width="8" height="5.5" viewBox="0 0 8 5.5"><path d="M1 1l3.0 3.5 3.0 -3.5" fill="none" stroke="#333" stroke-width="1.4"/></svg><div class="a" id="t38" style="left:713.40px;top:137.80px;font-size:12.00px;color:#222;font-weight:400;line-height:1;transform:scaleX(0.9352);transform-origin:0 0;">Styles de cellule</div><svg class="a" style="left:801px;top:143px;" width="8" height="5.5" viewBox="0 0 8 5.5"><path d="M1 1l3.0 3.5 3.0 -3.5" fill="none" stroke="#333" stroke-width="1.4"/></svg><svg class="a" style="left:900px;top:92px;" width="18" height="16" viewBox="0 0 18 16"><rect x="1.5" y="1.5" width="15" height="13" fill="#fff" stroke="#333" stroke-width="1"/><path d="M6.5 1.5v13M11.5 1.5v13M1.5 5.5h15M1.5 10.5h15" stroke="#444" stroke-width="1"/><rect x="6.5" y="5.5" width="10" height="5" fill="#8cc4f0" stroke="#1a6fc0" stroke-width="1"/><path d="M9 8H2.5M5 5.3L2.3 8 5 10.7" fill="none" stroke="#1a8fd6" stroke-width="1.3"/></svg><svg class="a" style="left:900px;top:114px;" width="18" height="16" viewBox="0 0 18 16"><rect x="1.5" y="1.5" width="15" height="13" fill="#fff" stroke="#333" stroke-width="1"/><path d="M6.5 1.5v13M11.5 1.5v13M1.5 5.5h15M1.5 10.5h15" stroke="#444" stroke-width="1"/><rect x="0" y="5.8" width="18" height="4.4" fill="#f3f3f3"/><rect x="4.5" y="5.5" width="5" height="5" fill="#8cc4f0" stroke="#1a6fc0" stroke-width="1"/><path d="M11.8 5.8l4.4 4.4M16.2 5.8l-4.4 4.4" stroke="#e8404a" stroke-width="1.1"/></svg><svg class="a" style="left:900px;top:135px;" width="18" height="18" viewBox="0 0 18 18"><rect x="1.5" y="3.5" width="15" height="13" fill="#fff" stroke="#333" stroke-width="1"/><path d="M5.5 3.5v13M12.5 3.5v13M1.5 7.5h15M1.5 12.5h15" stroke="#444" stroke-width="1"/><rect x="5.5" y="7.5" width="7" height="5" fill="#8cc4f0" stroke="#1a6fc0" stroke-width="1"/><rect x="0" y="0" width="18" height="3" fill="#f1f1f1"/><path d="M4.5 1.5h9M4.5 0v3M13.5 0v3" stroke="#1a8fd6" stroke-width="1"/></svg><div class="a" id="t39" style="left:922.46px;top:93.80px;font-size:12.00px;color:#222;font-weight:400;line-height:1;transform:scaleX(0.9353);transform-origin:0 0;">Insérer</div><svg class="a" style="left:963px;top:99px;" width="8" height="5.5" viewBox="0 0 8 5.5"><path d="M1 1l3.0 3.5 3.0 -3.5" fill="none" stroke="#333" stroke-width="1.4"/></svg><div class="a" id="t40" style="left:923.40px;top:115.80px;font-size:12.00px;color:#222;font-weight:400;line-height:1;transform:scaleX(0.9267);transform-origin:0 0;">Supprimer</div><svg class="a" style="left:981px;top:121px;" width="8" height="5.5" viewBox="0 0 8 5.5"><path d="M1 1l3.0 3.5 3.0 -3.5" fill="none" stroke="#333" stroke-width="1.4"/></svg><div class="a" id="t41" style="left:923.40px;top:137.80px;font-size:12.00px;color:#222;font-weight:400;line-height:1;transform:scaleX(0.9247);transform-origin:0 0;">Mise en forme</div><svg class="a" style="left:1000px;top:143px;" width="8" height="5.5" viewBox="0 0 8 5.5"><path d="M1 1l3.0 3.5 3.0 -3.5" fill="none" stroke="#333" stroke-width="1.4"/></svg><svg class="a" style="left:1034px;top:93px;" width="32" height="32" viewBox="0 0 32 32"><circle cx="19" cy="11" r="10" fill="#fbfbfb" stroke="#333" stroke-width="1.2"/><path d="M12 18.2L1 29" stroke="#333" stroke-width="1.2"/></svg><svg class="a" style="left:1068px;top:105.5px;" width="8" height="5.5" viewBox="0 0 8 5.5"><path d="M1 1l3.0 3.5 3.0 -3.5" fill="none" stroke="#333" stroke-width="1.4"/></svg><div class="a" id="t42" style="left:1037.30px;top:129.22px;font-size:11.50px;color:#222;font-weight:400;line-height:1;transform:scaleX(0.9779);transform-origin:0 0;">Édition</div><svg class="a" style="left:1117px;top:91px;" width="34" height="34" viewBox="0 0 34 34"><rect x="1.5" y="1.5" width="30" height="30" fill="#fbfbfb" stroke="#333" stroke-width="1.2"/><rect x="1.5" y="1.5" width="30" height="3" fill="#999"/><path d="M1.5 10h30M1.5 17h30M1.5 24h30M11 4.5v27M21 4.5v27" stroke="#bbb" stroke-width="1"/><circle cx="14.5" cy="13" r="9.5" fill="#fbfbfb" stroke="#333" stroke-width="1.2"/><rect x="10" y="11" width="2.5" height="6" fill="#aaa"/><rect x="13" y="8" width="2.5" height="9" fill="#fff" stroke="#777" stroke-width=".6"/><rect x="16" y="10" width="3" height="7" fill="#3b94e0"/><path d="M21.5 19.5l9.5 11" stroke="#333" stroke-width="1.3"/></svg><div class="a" id="t43" style="left:1113.50px;top:129.22px;font-size:11.50px;color:#222;font-weight:400;line-height:1;transform:scaleX(0.9463);transform-origin:0 0;">Analyser</div><div class="a" id="t44" style="left:1102.00px;top:140.72px;font-size:11.50px;color:#222;font-weight:400;line-height:1;transform:scaleX(0.9756);transform-origin:0 0;">des données</div><div class="a" style="left:0px;top:160px;width:1280px;height:26px;background:#fff;"></div><div class="a" style="left:0px;top:160px;width:86px;height:26px;background:#fff;border:1px solid #c8c8c8;border-left:none;border-top:none;"></div><div class="a" id="t45" style="left:10.00px;top:167.38px;font-size:12.50px;color:#222;font-weight:400;line-height:1;transform:scaleX(0.9293);transform-origin:0 0;">G17</div><svg class="a" style="left:71px;top:163px;" width="10" height="20" viewBox="0 0 10 20"><path d="M1.5 7.5l3.5-5 3.5 5z" fill="#666"/><path d="M1.5 13l3.5 5 3.5-5z" fill="#666"/></svg><svg class="a" style="left:99px;top:167px;" width="13" height="13" viewBox="0 0 13 13"><path d="M1.5 1.5l10 10M11.5 1.5l-10 10" stroke="#c4c4c4" stroke-width="1.4"/></svg><svg class="a" style="left:127px;top:167px;" width="16" height="13" viewBox="0 0 16 13"><path d="M1.5 6.5l4.5 4.5 8.5-9" fill="none" stroke="#c4c4c4" stroke-width="1.5"/></svg><div class="a" id="t46" style="left:158.00px;top:165.55px;font-size:17.00px;color:#333;font-weight:400;line-height:1;transform:scaleX(1.1790);transform-origin:0 0;font-family:'Liberation Serif',serif;font-style:italic;">fx</div><div class="a" style="left:180.5px;top:166px;width:1px;height:15px;background:#d6d6d6;"></div><div class="a" id="t47" style="left:188.00px;top:167.88px;font-size:12.50px;color:#1a1a1a;font-weight:400;line-height:1;transform:scaleX(1.0465);transform-origin:0 0;">00:12:11</div><svg class="a" style="left:1268px;top:169px;" width="9" height="7" viewBox="0 0 9 7"><path d="M.5.5h8L4.5 6.5z" fill="#555"/></svg><div class="a" style="left:0px;top:186px;width:1280px;height:1px;background:#b8b8b8;"></div><div class="a" style="left:0px;top:187px;width:1280px;height:1.5px;background:#ececec;"></div><div class="a" style="left:0px;top:188.5px;width:1280px;height:1px;background:#b8b8b8;"></div><div class="a" style="left:0px;top:189.5px;width:1265px;height:20.5px;background:linear-gradient(#fafafa,#f2f2f2);"></div><div class="a" style="left:0px;top:210px;width:1265px;height:1px;background:#bdbdbd;"></div><div class="a" style="left:22px;top:189.5px;width:1px;height:21px;background:#c8c8c8;"></div><svg class="a" style="left:4px;top:192px;" width="18" height="17" viewBox="0 0 18 17"><path d="M16.5 1.5V16.5H1.5z" fill="#dedede"/></svg><div class="a" style="left:400px;top:189.5px;width:71px;height:20.5px;background:linear-gradient(#e4e4e4,#d8d8d8);"></div><div class="a" style="left:400px;top:209px;width:71px;height:2px;background:#157a43;"></div><div class="a" style="left:22px;top:192.5px;width:23px;text-align:center;font-size:11.5px;line-height:14px;color:#555">A</div><div class="a" style="left:45px;top:191px;width:1px;height:19px;background:#dadada;"></div><div class="a" style="left:45px;top:192.5px;width:71px;text-align:center;font-size:11.5px;line-height:14px;color:#555">B</div><div class="a" style="left:116px;top:191px;width:1px;height:19px;background:#dadada;"></div><div class="a" style="left:116px;top:192.5px;width:71px;text-align:center;font-size:11.5px;line-height:14px;color:#555">C</div><div class="a" style="left:187px;top:191px;width:1px;height:19px;background:#dadada;"></div><div class="a" style="left:187px;top:192.5px;width:71px;text-align:center;font-size:11.5px;line-height:14px;color:#555">D</div><div class="a" style="left:258px;top:191px;width:1px;height:19px;background:#dadada;"></div><div class="a" style="left:258px;top:192.5px;width:71px;text-align:center;font-size:11.5px;line-height:14px;color:#555">E</div><div class="a" style="left:329px;top:191px;width:1px;height:19px;background:#dadada;"></div><div class="a" style="left:329px;top:192.5px;width:71px;text-align:center;font-size:11.5px;line-height:14px;color:#555">F</div><div class="a" style="left:400px;top:191px;width:1px;height:19px;background:#dadada;"></div><div class="a" style="left:400px;top:192.5px;width:71px;text-align:center;font-size:11.5px;line-height:14px;color:#157a43">G</div><div class="a" style="left:471px;top:191px;width:1px;height:19px;background:#dadada;"></div><div class="a" style="left:471px;top:192.5px;width:71px;text-align:center;font-size:11.5px;line-height:14px;color:#555">H</div><div class="a" style="left:542px;top:191px;width:1px;height:19px;background:#dadada;"></div><div class="a" style="left:542px;top:192.5px;width:71px;text-align:center;font-size:11.5px;line-height:14px;color:#555">I</div><div class="a" style="left:613px;top:191px;width:1px;height:19px;background:#dadada;"></div><div class="a" style="left:613px;top:192.5px;width:71px;text-align:center;font-size:11.5px;line-height:14px;color:#555">J</div><div class="a" style="left:684px;top:191px;width:1px;height:19px;background:#dadada;"></div><div class="a" style="left:684px;top:192.5px;width:71px;text-align:center;font-size:11.5px;line-height:14px;color:#555">K</div><div class="a" style="left:755px;top:191px;width:1px;height:19px;background:#dadada;"></div><div class="a" style="left:755px;top:192.5px;width:71px;text-align:center;font-size:11.5px;line-height:14px;color:#555">L</div><div class="a" style="left:826px;top:191px;width:1px;height:19px;background:#dadada;"></div><div class="a" style="left:826px;top:192.5px;width:71px;text-align:center;font-size:11.5px;line-height:14px;color:#555">M</div><div class="a" style="left:897px;top:191px;width:1px;height:19px;background:#dadada;"></div><div class="a" style="left:897px;top:192.5px;width:71px;text-align:center;font-size:11.5px;line-height:14px;color:#555">N</div><div class="a" style="left:968px;top:191px;width:1px;height:19px;background:#dadada;"></div><div class="a" style="left:968px;top:192.5px;width:71px;text-align:center;font-size:11.5px;line-height:14px;color:#555">O</div><div class="a" style="left:1039px;top:191px;width:1px;height:19px;background:#dadada;"></div><div class="a" style="left:1039px;top:192.5px;width:71px;text-align:center;font-size:11.5px;line-height:14px;color:#555">P</div><div class="a" style="left:1110px;top:191px;width:1px;height:19px;background:#dadada;"></div><div class="a" style="left:1110px;top:192.5px;width:71px;text-align:center;font-size:11.5px;line-height:14px;color:#555">Q</div><div class="a" style="left:1181px;top:191px;width:1px;height:19px;background:#dadada;"></div><div class="a" style="left:1181px;top:192.5px;width:71px;text-align:center;font-size:11.5px;line-height:14px;color:#555">R</div><div class="a" style="left:1252px;top:191px;width:1px;height:19px;background:#dadada;"></div><div class="a" style="left:1252px;top:191px;width:1px;height:19px;background:#dadada;"></div><div class="a" style="left:0px;top:211px;width:1265px;height:460px;background:#fff;"></div><div class="a" style="left:0px;top:211px;width:22px;height:460px;background:#f7f7f7;"></div><div class="a" style="left:22px;top:211px;width:1px;height:460px;background:#c8c8c8;"></div><div class="a" style="left:0px;top:226px;width:22px;height:1px;background:#dcdcdc;"></div><div class="a" style="left:0;top:211.5px;width:21px;text-align:center;font-size:11px;line-height:14px;color:#555">8</div><div class="a" style="left:0px;top:277px;width:22px;height:1px;background:#dcdcdc;"></div><div class="a" style="left:0;top:262.5px;width:21px;text-align:center;font-size:11px;line-height:14px;color:#555">9</div><div class="a" style="left:0px;top:293px;width:22px;height:1px;background:#dcdcdc;"></div><div class="a" style="left:0;top:278.5px;width:21px;text-align:center;font-size:11px;line-height:14px;color:#555">10</div><div class="a" style="left:0px;top:309px;width:22px;height:1px;background:#dcdcdc;"></div><div class="a" style="left:0;top:294.5px;width:21px;text-align:center;font-size:11px;line-height:14px;color:#555">11</div><div class="a" style="left:0px;top:325px;width:22px;height:1px;background:#dcdcdc;"></div><div class="a" style="left:0;top:310.5px;width:21px;text-align:center;font-size:11px;line-height:14px;color:#555">12</div><div class="a" style="left:0px;top:341px;width:22px;height:1px;background:#dcdcdc;"></div><div class="a" style="left:0;top:326.5px;width:21px;text-align:center;font-size:11px;line-height:14px;color:#555">13</div><div class="a" style="left:0px;top:357px;width:22px;height:1px;background:#dcdcdc;"></div><div class="a" style="left:0;top:342.5px;width:21px;text-align:center;font-size:11px;line-height:14px;color:#555">14</div><div class="a" style="left:0px;top:373px;width:22px;height:1px;background:#dcdcdc;"></div><div class="a" style="left:0;top:358.5px;width:21px;text-align:center;font-size:11px;line-height:14px;color:#555">15</div><div class="a" style="left:0px;top:389px;width:22px;height:1px;background:#dcdcdc;"></div><div class="a" style="left:0;top:374.5px;width:21px;text-align:center;font-size:11px;line-height:14px;color:#555">16</div><div class="a" style="left:0px;top:389px;width:22px;height:17px;background:linear-gradient(90deg,#e6e6e6,#dcdcdc);"></div><div class="a" style="left:20px;top:389px;width:2.5px;height:17px;background:#157a43;"></div><div class="a" style="left:0px;top:405px;width:22px;height:1px;background:#dcdcdc;"></div><div class="a" style="left:0;top:390.5px;width:21px;text-align:center;font-size:11px;line-height:14px;color:#157a43">17</div><div class="a" style="left:0px;top:421px;width:22px;height:1px;background:#dcdcdc;"></div><div class="a" style="left:0;top:406.5px;width:21px;text-align:center;font-size:11px;line-height:14px;color:#555">18</div><div class="a" style="left:0px;top:437px;width:22px;height:1px;background:#dcdcdc;"></div><div class="a" style="left:0;top:422.5px;width:21px;text-align:center;font-size:11px;line-height:14px;color:#555">19</div><div class="a" style="left:0px;top:453px;width:22px;height:1px;background:#dcdcdc;"></div><div class="a" style="left:0;top:438.5px;width:21px;text-align:center;font-size:11px;line-height:14px;color:#555">20</div><div class="a" style="left:0px;top:469px;width:22px;height:1px;background:#dcdcdc;"></div><div class="a" style="left:0;top:454.5px;width:21px;text-align:center;font-size:11px;line-height:14px;color:#555">21</div><div class="a" style="left:0px;top:485px;width:22px;height:1px;background:#dcdcdc;"></div><div class="a" style="left:0;top:470.5px;width:21px;text-align:center;font-size:11px;line-height:14px;color:#555">22</div><div class="a" style="left:0px;top:501px;width:22px;height:1px;background:#dcdcdc;"></div><div class="a" style="left:0;top:486.5px;width:21px;text-align:center;font-size:11px;line-height:14px;color:#555">23</div><div class="a" style="left:0px;top:517px;width:22px;height:1px;background:#dcdcdc;"></div><div class="a" style="left:0;top:502.5px;width:21px;text-align:center;font-size:11px;line-height:14px;color:#555">24</div><div class="a" style="left:0px;top:533px;width:22px;height:1px;background:#dcdcdc;"></div><div class="a" style="left:0;top:518.5px;width:21px;text-align:center;font-size:11px;line-height:14px;color:#555">25</div><div class="a" style="left:0px;top:549px;width:22px;height:1px;background:#dcdcdc;"></div><div class="a" style="left:0;top:534.5px;width:21px;text-align:center;font-size:11px;line-height:14px;color:#555">26</div><div class="a" style="left:0px;top:565px;width:22px;height:1px;background:#dcdcdc;"></div><div class="a" style="left:0;top:550.5px;width:21px;text-align:center;font-size:11px;line-height:14px;color:#555">27</div><div class="a" style="left:0px;top:581px;width:22px;height:1px;background:#dcdcdc;"></div><div class="a" style="left:0;top:566.5px;width:21px;text-align:center;font-size:11px;line-height:14px;color:#555">28</div><div class="a" style="left:0px;top:597px;width:22px;height:1px;background:#dcdcdc;"></div><div class="a" style="left:0;top:582.5px;width:21px;text-align:center;font-size:11px;line-height:14px;color:#555">29</div><div class="a" style="left:0px;top:613px;width:22px;height:1px;background:#dcdcdc;"></div><div class="a" style="left:0;top:598.5px;width:21px;text-align:center;font-size:11px;line-height:14px;color:#555">30</div><div class="a" style="left:0px;top:629px;width:22px;height:1px;background:#dcdcdc;"></div><div class="a" style="left:0;top:614.5px;width:21px;text-align:center;font-size:11px;line-height:14px;color:#555">31</div><div class="a" style="left:0px;top:645px;width:22px;height:1px;background:#dcdcdc;"></div><div class="a" style="left:0;top:630.5px;width:21px;text-align:center;font-size:11px;line-height:14px;color:#555">32</div><div class="a" style="left:0px;top:661px;width:22px;height:1px;background:#dcdcdc;"></div><div class="a" style="left:0;top:646.5px;width:21px;text-align:center;font-size:11px;line-height:14px;color:#555">33</div><div class="a" style="left:0;top:662.5px;width:21px;text-align:center;font-size:11px;line-height:14px;color:#555">34</div><div class="a" style="left:45px;top:227px;width:1220px;height:50px;background:#4374bf;"></div><div class="a" style="left:45px;top:277px;width:1220px;height:1px;background:#8fa9d6;"></div><div class="a" style="left:45px;top:278px;width:1220px;height:15px;background:#d9e1f2;"></div><div class="a" style="left:45px;top:293px;width:1220px;height:1px;background:#8ea9db;"></div><div class="a" style="left:45px;top:294px;width:1220px;height:15px;background:#fff;"></div><div class="a" style="left:45px;top:309px;width:1220px;height:1px;background:#8ea9db;"></div><div class="a" style="left:45px;top:310px;width:1220px;height:15px;background:#d9e1f2;"></div><div class="a" style="left:45px;top:325px;width:1220px;height:1px;background:#8ea9db;"></div><div class="a" style="left:45px;top:326px;width:1220px;height:15px;background:#fff;"></div><div class="a" style="left:45px;top:341px;width:1220px;height:1px;background:#8ea9db;"></div><div class="a" style="left:45px;top:342px;width:1220px;height:15px;background:#d9e1f2;"></div><div class="a" style="left:45px;top:357px;width:1220px;height:1px;background:#8ea9db;"></div><div class="a" style="left:45px;top:358px;width:1220px;height:15px;background:#fff;"></div><div class="a" style="left:45px;top:373px;width:1220px;height:1px;background:#8ea9db;"></div><div class="a" style="left:45px;top:374px;width:1220px;height:15px;background:#d9e1f2;"></div><div class="a" style="left:45px;top:389px;width:1220px;height:1px;background:#8ea9db;"></div><div class="a" style="left:45px;top:390px;width:1220px;height:15px;background:#fff;"></div><div class="a" style="left:45px;top:405px;width:1220px;height:1px;background:#8ea9db;"></div><div class="a" style="left:45px;top:406px;width:1220px;height:15px;background:#d9e1f2;"></div><div class="a" style="left:45px;top:421px;width:1220px;height:1px;background:#8ea9db;"></div><div class="a" style="left:45px;top:422px;width:1220px;height:15px;background:#fff;"></div><div class="a" style="left:45px;top:437px;width:1220px;height:1px;background:#8ea9db;"></div><div class="a" style="left:45px;top:438px;width:1220px;height:15px;background:#d9e1f2;"></div><div class="a" style="left:45px;top:453px;width:1220px;height:1px;background:#8ea9db;"></div><div class="a" style="left:45px;top:454px;width:1220px;height:15px;background:#fff;"></div><div class="a" style="left:45px;top:469px;width:1220px;height:1px;background:#8ea9db;"></div><div class="a" style="left:45px;top:470px;width:1220px;height:15px;background:#d9e1f2;"></div><div class="a" style="left:45px;top:485px;width:1220px;height:1px;background:#8ea9db;"></div><div class="a" style="left:45px;top:486px;width:1220px;height:15px;background:#fff;"></div><div class="a" style="left:45px;top:501px;width:1220px;height:1px;background:#8ea9db;"></div><div class="a" style="left:45px;top:502px;width:1220px;height:15px;background:#d9e1f2;"></div><div class="a" style="left:45px;top:517px;width:1220px;height:1px;background:#8ea9db;"></div><div class="a" style="left:45px;top:518px;width:1220px;height:15px;background:#fff;"></div><div class="a" style="left:45px;top:533px;width:1220px;height:1px;background:#8ea9db;"></div><div class="a" style="left:45px;top:227px;width:1px;height:307px;background:#8ea9db;"></div><div class="a" style="left:45px;top:244.5px;width:71px;text-align:center;font-size:11px;line-height:14px;color:#fff;font-weight:700;transform:scaleX(.93)">Dates</div><div class="a" style="left:187px;top:244.5px;width:71px;text-align:center;font-size:11px;line-height:14px;color:#fff;font-weight:700;transform:scaleX(.93)">Durée</div><div class="a" style="left:258px;top:244.5px;width:71px;text-align:center;font-size:11px;line-height:14px;color:#fff;font-weight:700;transform:scaleX(.93)">Heure début</div><div class="a" style="left:329px;top:244.5px;width:71px;text-align:center;font-size:11px;line-height:14px;color:#fff;font-weight:700;transform:scaleX(.93)">Heure fin</div><div class="a" style="left:116px;top:236px;width:71px;text-align:center;font-size:11px;line-height:16px;color:#fff;font-weight:700;white-space:normal;transform:scaleX(.91)">Distance<br>parcourue</div><div class="a" style="left:400px;top:244.5px;width:71px;text-align:center;font-size:11px;line-height:14px;color:#fff;font-weight:700;transform:scaleX(.93)">KM 1</div><div class="a" style="left:471px;top:244.5px;width:71px;text-align:center;font-size:11px;line-height:14px;color:#fff;font-weight:700;transform:scaleX(.93)">KM 2</div><div class="a" style="left:542px;top:244.5px;width:71px;text-align:center;font-size:11px;line-height:14px;color:#fff;font-weight:700;transform:scaleX(.93)">KM 3</div><div class="a" style="left:613px;top:244.5px;width:71px;text-align:center;font-size:11px;line-height:14px;color:#fff;font-weight:700;transform:scaleX(.93)">KM 4</div><div class="a" style="left:684px;top:244.5px;width:71px;text-align:center;font-size:11px;line-height:14px;color:#fff;font-weight:700;transform:scaleX(.93)">KM 5</div><div class="a" style="left:755px;top:244.5px;width:71px;text-align:center;font-size:11px;line-height:14px;color:#fff;font-weight:700;transform:scaleX(.93)">KM 6</div><div class="a" style="left:829px;top:244.5px;font-size:11px;line-height:14px;color:#fff;font-weight:700;transform:scaleX(.93);transform-origin:0 0">FC KM 1</div><div class="a" style="left:900px;top:244.5px;font-size:11px;line-height:14px;color:#fff;font-weight:700;transform:scaleX(.93);transform-origin:0 0">FC KM 2</div><div class="a" style="left:971px;top:244.5px;font-size:11px;line-height:14px;color:#fff;font-weight:700;transform:scaleX(.93);transform-origin:0 0">FC KM 3</div><div class="a" style="left:1042px;top:244.5px;font-size:11px;line-height:14px;color:#fff;font-weight:700;transform:scaleX(.93);transform-origin:0 0">FC KM 4</div><div class="a" style="left:1113px;top:244.5px;font-size:11px;line-height:14px;color:#fff;font-weight:700;transform:scaleX(.93);transform-origin:0 0">FC KM 5</div><div class="a" style="left:1184px;top:244.5px;font-size:11px;line-height:14px;color:#fff;font-weight:700;transform:scaleX(.93);transform-origin:0 0">FC KM 6</div><div class="a" style="left:1260px;top:245px;font-size:11px;line-height:14px;color:#fff;font-weight:700;width:5px;overflow:hidden">V</div><div class="a" style="left:45px;top:279px;width:69px;text-align:right;font-size:11px;line-height:14px;color:#111;-webkit-text-stroke:0.25px #111;letter-spacing:.33px">21/06/2025</div><div class="a" style="left:117.2px;top:279px;width:71px;text-align:center;font-size:11px;line-height:14px;color:#111;-webkit-text-stroke:0.25px #111;transform:scaleX(0.91)">5,35</div><div class="a" style="left:187.3px;top:279px;width:71px;text-align:center;font-size:11px;line-height:14px;color:#111;-webkit-text-stroke:0.25px #111;transform:scaleX(0.96)">0.01:10:17</div><div class="a" style="left:259.2px;top:279px;width:71px;text-align:center;font-size:11px;line-height:14px;color:#111;-webkit-text-stroke:0.25px #111;transform:scaleX(0.92)">8:00</div><div class="a" style="left:330.2px;top:279px;width:71px;text-align:center;font-size:11px;line-height:14px;color:#111;-webkit-text-stroke:0.25px #111;transform:scaleX(0.92)">9:10</div><div class="a" style="left:400.3px;top:279px;width:71px;text-align:center;font-size:11px;line-height:14px;color:#111;-webkit-text-stroke:0.25px #111;transform:scaleX(0.95)">00:12:36</div><div class="a" style="left:471.3px;top:279px;width:71px;text-align:center;font-size:11px;line-height:14px;color:#111;-webkit-text-stroke:0.25px #111;transform:scaleX(0.95)">00:12:28</div><div class="a" style="left:542.3px;top:279px;width:71px;text-align:center;font-size:11px;line-height:14px;color:#111;-webkit-text-stroke:0.25px #111;transform:scaleX(0.95)">00:12:10</div><div class="a" style="left:613.3px;top:279px;width:71px;text-align:center;font-size:11px;line-height:14px;color:#111;-webkit-text-stroke:0.25px #111;transform:scaleX(0.95)">00:12:30</div><div class="a" style="left:684.3px;top:279px;width:71px;text-align:center;font-size:11px;line-height:14px;color:#111;-webkit-text-stroke:0.25px #111;transform:scaleX(0.95)">00:11:58</div><div class="a" style="left:755.3px;top:279px;width:71px;text-align:center;font-size:11px;line-height:14px;color:#111;-webkit-text-stroke:0.25px #111;transform:scaleX(0.95)">00:02:40</div><div class="a" style="left:826px;top:279px;width:68.5px;text-align:right;font-size:11px;line-height:14px;color:#111;-webkit-text-stroke:0.25px #111;transform:scaleX(.88);transform-origin:100% 0">108</div><div class="a" style="left:897px;top:279px;width:68.5px;text-align:right;font-size:11px;line-height:14px;color:#111;-webkit-text-stroke:0.25px #111;transform:scaleX(.88);transform-origin:100% 0">114</div><div class="a" style="left:968px;top:279px;width:68.5px;text-align:right;font-size:11px;line-height:14px;color:#111;-webkit-text-stroke:0.25px #111;transform:scaleX(.88);transform-origin:100% 0">115</div><div class="a" style="left:1039px;top:279px;width:68.5px;text-align:right;font-size:11px;line-height:14px;color:#111;-webkit-text-stroke:0.25px #111;transform:scaleX(.88);transform-origin:100% 0">112</div><div class="a" style="left:1110px;top:279px;width:68.5px;text-align:right;font-size:11px;line-height:14px;color:#111;-webkit-text-stroke:0.25px #111;transform:scaleX(.88);transform-origin:100% 0">110</div><div class="a" style="left:1181px;top:279px;width:68.5px;text-align:right;font-size:11px;line-height:14px;color:#111;-webkit-text-stroke:0.25px #111;transform:scaleX(.88);transform-origin:100% 0">108</div><div class="a" style="left:1262.5px;top:279px;font-size:11px;line-height:14px;color:#111;width:2.5px;overflow:hidden">0</div><div class="a" style="left:45px;top:295px;width:69px;text-align:right;font-size:11px;line-height:14px;color:#111;-webkit-text-stroke:0.25px #111;letter-spacing:.33px">22/06/2026</div><div class="a" style="left:117.2px;top:295px;width:71px;text-align:center;font-size:11px;line-height:14px;color:#111;-webkit-text-stroke:0.25px #111;transform:scaleX(0.91)">5,24</div><div class="a" style="left:187.3px;top:295px;width:71px;text-align:center;font-size:11px;line-height:14px;color:#111;-webkit-text-stroke:0.25px #111;transform:scaleX(0.96)">0.01:05:57</div><div class="a" style="left:259.2px;top:295px;width:71px;text-align:center;font-size:11px;line-height:14px;color:#111;-webkit-text-stroke:0.25px #111;transform:scaleX(0.92)">7:57</div><div class="a" style="left:330.2px;top:295px;width:71px;text-align:center;font-size:11px;line-height:14px;color:#111;-webkit-text-stroke:0.25px #111;transform:scaleX(0.92)">9:02</div><div class="a" style="left:400.3px;top:295px;width:71px;text-align:center;font-size:11px;line-height:14px;color:#111;-webkit-text-stroke:0.25px #111;transform:scaleX(0.95)">00:12:21</div><div class="a" style="left:471.3px;top:295px;width:71px;text-align:center;font-size:11px;line-height:14px;color:#111;-webkit-text-stroke:0.25px #111;transform:scaleX(0.95)">00:11:58</div><div class="a" style="left:542.3px;top:295px;width:71px;text-align:center;font-size:11px;line-height:14px;color:#111;-webkit-text-stroke:0.25px #111;transform:scaleX(0.95)">00:12:02</div><div class="a" style="left:613.3px;top:295px;width:71px;text-align:center;font-size:11px;line-height:14px;color:#111;-webkit-text-stroke:0.25px #111;transform:scaleX(0.95)">00:11:55</div><div class="a" style="left:684.3px;top:295px;width:71px;text-align:center;font-size:11px;line-height:14px;color:#111;-webkit-text-stroke:0.25px #111;transform:scaleX(0.95)">00:11:47</div><div class="a" style="left:755.3px;top:295px;width:71px;text-align:center;font-size:11px;line-height:14px;color:#111;-webkit-text-stroke:0.25px #111;transform:scaleX(0.95)">00:02:50</div><div class="a" style="left:826px;top:295px;width:68.5px;text-align:right;font-size:11px;line-height:14px;color:#111;-webkit-text-stroke:0.25px #111;transform:scaleX(.88);transform-origin:100% 0">105</div><div class="a" style="left:897px;top:295px;width:68.5px;text-align:right;font-size:11px;line-height:14px;color:#111;-webkit-text-stroke:0.25px #111;transform:scaleX(.88);transform-origin:100% 0">113</div><div class="a" style="left:968px;top:295px;width:68.5px;text-align:right;font-size:11px;line-height:14px;color:#111;-webkit-text-stroke:0.25px #111;transform:scaleX(.88);transform-origin:100% 0">115</div><div class="a" style="left:1039px;top:295px;width:68.5px;text-align:right;font-size:11px;line-height:14px;color:#111;-webkit-text-stroke:0.25px #111;transform:scaleX(.88);transform-origin:100% 0">114</div><div class="a" style="left:1110px;top:295px;width:68.5px;text-align:right;font-size:11px;line-height:14px;color:#111;-webkit-text-stroke:0.25px #111;transform:scaleX(.88);transform-origin:100% 0">114</div><div class="a" style="left:1181px;top:295px;width:68.5px;text-align:right;font-size:11px;line-height:14px;color:#111;-webkit-text-stroke:0.25px #111;transform:scaleX(.88);transform-origin:100% 0">115</div><div class="a" style="left:1262.5px;top:295px;font-size:11px;line-height:14px;color:#111;width:2.5px;overflow:hidden">0</div><div class="a" style="left:45px;top:311px;width:69px;text-align:right;font-size:11px;line-height:14px;color:#111;-webkit-text-stroke:0.25px #111;letter-spacing:.33px">23/06/2025</div><div class="a" style="left:117.2px;top:311px;width:71px;text-align:center;font-size:11px;line-height:14px;color:#111;-webkit-text-stroke:0.25px #111;transform:scaleX(0.91)">5,25</div><div class="a" style="left:187.3px;top:311px;width:71px;text-align:center;font-size:11px;line-height:14px;color:#111;-webkit-text-stroke:0.25px #111;transform:scaleX(0.96)">0.01:05:08</div><div class="a" style="left:259.2px;top:311px;width:71px;text-align:center;font-size:11px;line-height:14px;color:#111;-webkit-text-stroke:0.25px #111;transform:scaleX(0.92)">7:53</div><div class="a" style="left:330.2px;top:311px;width:71px;text-align:center;font-size:11px;line-height:14px;color:#111;-webkit-text-stroke:0.25px #111;transform:scaleX(0.92)">8:58</div><div class="a" style="left:400.3px;top:311px;width:71px;text-align:center;font-size:11px;line-height:14px;color:#111;-webkit-text-stroke:0.25px #111;transform:scaleX(0.95)">00:11:56</div><div class="a" style="left:471.3px;top:311px;width:71px;text-align:center;font-size:11px;line-height:14px;color:#111;-webkit-text-stroke:0.25px #111;transform:scaleX(0.95)">00:12:34</div><div class="a" style="left:542.3px;top:311px;width:71px;text-align:center;font-size:11px;line-height:14px;color:#111;-webkit-text-stroke:0.25px #111;transform:scaleX(0.95)">00:12:23</div><div class="a" style="left:613.3px;top:311px;width:71px;text-align:center;font-size:11px;line-height:14px;color:#111;-webkit-text-stroke:0.25px #111;transform:scaleX(0.95)">00:12:38</div><div class="a" style="left:684.3px;top:311px;width:71px;text-align:center;font-size:11px;line-height:14px;color:#111;-webkit-text-stroke:0.25px #111;transform:scaleX(0.95)">00:12:24</div><div class="a" style="left:755.3px;top:311px;width:71px;text-align:center;font-size:11px;line-height:14px;color:#111;-webkit-text-stroke:0.25px #111;transform:scaleX(0.95)">00:03:13</div><div class="a" style="left:826px;top:311px;width:68.5px;text-align:right;font-size:11px;line-height:14px;color:#111;-webkit-text-stroke:0.25px #111;transform:scaleX(.88);transform-origin:100% 0">109</div><div class="a" style="left:897px;top:311px;width:68.5px;text-align:right;font-size:11px;line-height:14px;color:#111;-webkit-text-stroke:0.25px #111;transform:scaleX(.88);transform-origin:100% 0">111</div><div class="a" style="left:968px;top:311px;width:68.5px;text-align:right;font-size:11px;line-height:14px;color:#111;-webkit-text-stroke:0.25px #111;transform:scaleX(.88);transform-origin:100% 0">113</div><div class="a" style="left:1039px;top:311px;width:68.5px;text-align:right;font-size:11px;line-height:14px;color:#111;-webkit-text-stroke:0.25px #111;transform:scaleX(.88);transform-origin:100% 0">111</div><div class="a" style="left:1110px;top:311px;width:68.5px;text-align:right;font-size:11px;line-height:14px;color:#111;-webkit-text-stroke:0.25px #111;transform:scaleX(.88);transform-origin:100% 0">111</div><div class="a" style="left:1181px;top:311px;width:68.5px;text-align:right;font-size:11px;line-height:14px;color:#111;-webkit-text-stroke:0.25px #111;transform:scaleX(.88);transform-origin:100% 0">107</div><div class="a" style="left:1262.5px;top:311px;font-size:11px;line-height:14px;color:#111;width:2.5px;overflow:hidden">0</div><div class="a" style="left:45px;top:327px;width:69px;text-align:right;font-size:11px;line-height:14px;color:#111;-webkit-text-stroke:0.25px #111;letter-spacing:.33px">24/06/2025</div><div class="a" style="left:117.2px;top:327px;width:71px;text-align:center;font-size:11px;line-height:14px;color:#111;-webkit-text-stroke:0.25px #111;transform:scaleX(0.91)">5,25</div><div class="a" style="left:187.3px;top:327px;width:71px;text-align:center;font-size:11px;line-height:14px;color:#111;-webkit-text-stroke:0.25px #111;transform:scaleX(0.96)">0.01:02:04</div><div class="a" style="left:259.2px;top:327px;width:71px;text-align:center;font-size:11px;line-height:14px;color:#111;-webkit-text-stroke:0.25px #111;transform:scaleX(0.92)">7:40</div><div class="a" style="left:330.2px;top:327px;width:71px;text-align:center;font-size:11px;line-height:14px;color:#111;-webkit-text-stroke:0.25px #111;transform:scaleX(0.92)">8:42</div><div class="a" style="left:400.3px;top:327px;width:71px;text-align:center;font-size:11px;line-height:14px;color:#111;-webkit-text-stroke:0.25px #111;transform:scaleX(0.95)">00:12:44</div><div class="a" style="left:471.3px;top:327px;width:71px;text-align:center;font-size:11px;line-height:14px;color:#111;-webkit-text-stroke:0.25px #111;transform:scaleX(0.95)">00:11:54</div><div class="a" style="left:542.3px;top:327px;width:71px;text-align:center;font-size:11px;line-height:14px;color:#111;-webkit-text-stroke:0.25px #111;transform:scaleX(0.95)">00:11:36</div><div class="a" style="left:613.3px;top:327px;width:71px;text-align:center;font-size:11px;line-height:14px;color:#111;-webkit-text-stroke:0.25px #111;transform:scaleX(0.95)">00:11:37</div><div class="a" style="left:684.3px;top:327px;width:71px;text-align:center;font-size:11px;line-height:14px;color:#111;-webkit-text-stroke:0.25px #111;transform:scaleX(0.95)">00:11:23</div><div class="a" style="left:755.3px;top:327px;width:71px;text-align:center;font-size:11px;line-height:14px;color:#111;-webkit-text-stroke:0.25px #111;transform:scaleX(0.95)">00:02:50</div><div class="a" style="left:826px;top:327px;width:68.5px;text-align:right;font-size:11px;line-height:14px;color:#111;-webkit-text-stroke:0.25px #111;transform:scaleX(.88);transform-origin:100% 0">106</div><div class="a" style="left:897px;top:327px;width:68.5px;text-align:right;font-size:11px;line-height:14px;color:#111;-webkit-text-stroke:0.25px #111;transform:scaleX(.88);transform-origin:100% 0">112</div><div class="a" style="left:968px;top:327px;width:68.5px;text-align:right;font-size:11px;line-height:14px;color:#111;-webkit-text-stroke:0.25px #111;transform:scaleX(.88);transform-origin:100% 0">114</div><div class="a" style="left:1039px;top:327px;width:68.5px;text-align:right;font-size:11px;line-height:14px;color:#111;-webkit-text-stroke:0.25px #111;transform:scaleX(.88);transform-origin:100% 0">115</div><div class="a" style="left:1110px;top:327px;width:68.5px;text-align:right;font-size:11px;line-height:14px;color:#111;-webkit-text-stroke:0.25px #111;transform:scaleX(.88);transform-origin:100% 0">117</div><div class="a" style="left:1181px;top:327px;width:68.5px;text-align:right;font-size:11px;line-height:14px;color:#111;-webkit-text-stroke:0.25px #111;transform:scaleX(.88);transform-origin:100% 0">118</div><div class="a" style="left:1262.5px;top:327px;font-size:11px;line-height:14px;color:#111;width:2.5px;overflow:hidden">0</div><div class="a" style="left:45px;top:343px;width:69px;text-align:right;font-size:11px;line-height:14px;color:#111;-webkit-text-stroke:0.25px #111;letter-spacing:.33px">25/06/2026</div><div class="a" style="left:117.2px;top:343px;width:71px;text-align:center;font-size:11px;line-height:14px;color:#111;-webkit-text-stroke:0.25px #111;transform:scaleX(0.91)">5,20</div><div class="a" style="left:187.3px;top:343px;width:71px;text-align:center;font-size:11px;line-height:14px;color:#111;-webkit-text-stroke:0.25px #111;transform:scaleX(0.96)">0.01:09:08</div><div class="a" style="left:259.2px;top:343px;width:71px;text-align:center;font-size:11px;line-height:14px;color:#111;-webkit-text-stroke:0.25px #111;transform:scaleX(0.92)">7:46</div><div class="a" style="left:330.2px;top:343px;width:71px;text-align:center;font-size:11px;line-height:14px;color:#111;-webkit-text-stroke:0.25px #111;transform:scaleX(0.92)">8:55</div><div class="a" style="left:400.3px;top:343px;width:71px;text-align:center;font-size:11px;line-height:14px;color:#111;-webkit-text-stroke:0.25px #111;transform:scaleX(0.95)">00:13:23</div><div class="a" style="left:471.3px;top:343px;width:71px;text-align:center;font-size:11px;line-height:14px;color:#111;-webkit-text-stroke:0.25px #111;transform:scaleX(0.95)">00:13:51</div><div class="a" style="left:542.3px;top:343px;width:71px;text-align:center;font-size:11px;line-height:14px;color:#111;-webkit-text-stroke:0.25px #111;transform:scaleX(0.95)">00:12:53</div><div class="a" style="left:613.3px;top:343px;width:71px;text-align:center;font-size:11px;line-height:14px;color:#111;-webkit-text-stroke:0.25px #111;transform:scaleX(0.95)">00:12:45</div><div class="a" style="left:684.3px;top:343px;width:71px;text-align:center;font-size:11px;line-height:14px;color:#111;-webkit-text-stroke:0.25px #111;transform:scaleX(0.95)">00:13:29</div><div class="a" style="left:755.3px;top:343px;width:71px;text-align:center;font-size:11px;line-height:14px;color:#111;-webkit-text-stroke:0.25px #111;transform:scaleX(0.95)">00:02:47</div><div class="a" style="left:826px;top:343px;width:68.5px;text-align:right;font-size:11px;line-height:14px;color:#111;-webkit-text-stroke:0.25px #111;transform:scaleX(.88);transform-origin:100% 0">119</div><div class="a" style="left:897px;top:343px;width:68.5px;text-align:right;font-size:11px;line-height:14px;color:#111;-webkit-text-stroke:0.25px #111;transform:scaleX(.88);transform-origin:100% 0">114</div><div class="a" style="left:968px;top:343px;width:68.5px;text-align:right;font-size:11px;line-height:14px;color:#111;-webkit-text-stroke:0.25px #111;transform:scaleX(.88);transform-origin:100% 0">118</div><div class="a" style="left:1039px;top:343px;width:68.5px;text-align:right;font-size:11px;line-height:14px;color:#111;-webkit-text-stroke:0.25px #111;transform:scaleX(.88);transform-origin:100% 0">121</div><div class="a" style="left:1110px;top:343px;width:68.5px;text-align:right;font-size:11px;line-height:14px;color:#111;-webkit-text-stroke:0.25px #111;transform:scaleX(.88);transform-origin:100% 0">118</div><div class="a" style="left:1181px;top:343px;width:68.5px;text-align:right;font-size:11px;line-height:14px;color:#111;-webkit-text-stroke:0.25px #111;transform:scaleX(.88);transform-origin:100% 0">112</div><div class="a" style="left:1262.5px;top:343px;font-size:11px;line-height:14px;color:#111;width:2.5px;overflow:hidden">0</div><div class="a" style="left:45px;top:359px;width:69px;text-align:right;font-size:11px;line-height:14px;color:#111;-webkit-text-stroke:0.25px #111;letter-spacing:.33px">26/06/2025</div><div class="a" style="left:117.2px;top:359px;width:71px;text-align:center;font-size:11px;line-height:14px;color:#111;-webkit-text-stroke:0.25px #111;transform:scaleX(0.91)">5,25</div><div class="a" style="left:187.3px;top:359px;width:71px;text-align:center;font-size:11px;line-height:14px;color:#111;-webkit-text-stroke:0.25px #111;transform:scaleX(0.96)">0.01:08:24</div><div class="a" style="left:259.2px;top:359px;width:71px;text-align:center;font-size:11px;line-height:14px;color:#111;-webkit-text-stroke:0.25px #111;transform:scaleX(0.92)">9:35</div><div class="a" style="left:330.2px;top:359px;width:71px;text-align:center;font-size:11px;line-height:14px;color:#111;-webkit-text-stroke:0.25px #111;transform:scaleX(0.92)">10:43</div><div class="a" style="left:400.3px;top:359px;width:71px;text-align:center;font-size:11px;line-height:14px;color:#111;-webkit-text-stroke:0.25px #111;transform:scaleX(0.95)">00:13:46</div><div class="a" style="left:471.3px;top:359px;width:71px;text-align:center;font-size:11px;line-height:14px;color:#111;-webkit-text-stroke:0.25px #111;transform:scaleX(0.95)">00:13:03</div><div class="a" style="left:542.3px;top:359px;width:71px;text-align:center;font-size:11px;line-height:14px;color:#111;-webkit-text-stroke:0.25px #111;transform:scaleX(0.95)">00:12:53</div><div class="a" style="left:613.3px;top:359px;width:71px;text-align:center;font-size:11px;line-height:14px;color:#111;-webkit-text-stroke:0.25px #111;transform:scaleX(0.95)">00:12:38</div><div class="a" style="left:684.3px;top:359px;width:71px;text-align:center;font-size:11px;line-height:14px;color:#111;-webkit-text-stroke:0.25px #111;transform:scaleX(0.95)">00:12:44</div><div class="a" style="left:755.3px;top:359px;width:71px;text-align:center;font-size:11px;line-height:14px;color:#111;-webkit-text-stroke:0.25px #111;transform:scaleX(0.95)">00:03:20</div><div class="a" style="left:826px;top:359px;width:68.5px;text-align:right;font-size:11px;line-height:14px;color:#111;-webkit-text-stroke:0.25px #111;transform:scaleX(.88);transform-origin:100% 0">107</div><div class="a" style="left:897px;top:359px;width:68.5px;text-align:right;font-size:11px;line-height:14px;color:#111;-webkit-text-stroke:0.25px #111;transform:scaleX(.88);transform-origin:100% 0">113</div><div class="a" style="left:968px;top:359px;width:68.5px;text-align:right;font-size:11px;line-height:14px;color:#111;-webkit-text-stroke:0.25px #111;transform:scaleX(.88);transform-origin:100% 0">114</div><div class="a" style="left:1039px;top:359px;width:68.5px;text-align:right;font-size:11px;line-height:14px;color:#111;-webkit-text-stroke:0.25px #111;transform:scaleX(.88);transform-origin:100% 0">118</div><div class="a" style="left:1110px;top:359px;width:68.5px;text-align:right;font-size:11px;line-height:14px;color:#111;-webkit-text-stroke:0.25px #111;transform:scaleX(.88);transform-origin:100% 0">118</div><div class="a" style="left:1181px;top:359px;width:68.5px;text-align:right;font-size:11px;line-height:14px;color:#111;-webkit-text-stroke:0.25px #111;transform:scaleX(.88);transform-origin:100% 0">118</div><div class="a" style="left:1262.5px;top:359px;font-size:11px;line-height:14px;color:#111;width:2.5px;overflow:hidden">0</div><div class="a" style="left:45px;top:375px;width:69px;text-align:right;font-size:11px;line-height:14px;color:#111;-webkit-text-stroke:0.25px #111;letter-spacing:.33px">27/06/2025</div><div class="a" style="left:117.2px;top:375px;width:71px;text-align:center;font-size:11px;line-height:14px;color:#111;-webkit-text-stroke:0.25px #111;transform:scaleX(0.91)">4,90</div><div class="a" style="left:187.3px;top:375px;width:71px;text-align:center;font-size:11px;line-height:14px;color:#111;-webkit-text-stroke:0.25px #111;transform:scaleX(0.96)">0.01:01:54</div><div class="a" style="left:259.2px;top:375px;width:71px;text-align:center;font-size:11px;line-height:14px;color:#111;-webkit-text-stroke:0.25px #111;transform:scaleX(0.92)">9:09</div><div class="a" style="left:330.2px;top:375px;width:71px;text-align:center;font-size:11px;line-height:14px;color:#111;-webkit-text-stroke:0.25px #111;transform:scaleX(0.92)">10:10</div><div class="a" style="left:400.3px;top:375px;width:71px;text-align:center;font-size:11px;line-height:14px;color:#111;-webkit-text-stroke:0.25px #111;transform:scaleX(0.95)">00:13:00</div><div class="a" style="left:471.3px;top:375px;width:71px;text-align:center;font-size:11px;line-height:14px;color:#111;-webkit-text-stroke:0.25px #111;transform:scaleX(0.95)">00:12:27</div><div class="a" style="left:542.3px;top:375px;width:71px;text-align:center;font-size:11px;line-height:14px;color:#111;-webkit-text-stroke:0.25px #111;transform:scaleX(0.95)">00:12:24</div><div class="a" style="left:613.3px;top:375px;width:71px;text-align:center;font-size:11px;line-height:14px;color:#111;-webkit-text-stroke:0.25px #111;transform:scaleX(0.95)">00:12:28</div><div class="a" style="left:684.3px;top:375px;width:71px;text-align:center;font-size:11px;line-height:14px;color:#111;-webkit-text-stroke:0.25px #111;transform:scaleX(0.95)">00:11:35</div><div class="a" style="left:826px;top:375px;width:68.5px;text-align:right;font-size:11px;line-height:14px;color:#111;-webkit-text-stroke:0.25px #111;transform:scaleX(.88);transform-origin:100% 0">109</div><div class="a" style="left:897px;top:375px;width:68.5px;text-align:right;font-size:11px;line-height:14px;color:#111;-webkit-text-stroke:0.25px #111;transform:scaleX(.88);transform-origin:100% 0">113</div><div class="a" style="left:968px;top:375px;width:68.5px;text-align:right;font-size:11px;line-height:14px;color:#111;-webkit-text-stroke:0.25px #111;transform:scaleX(.88);transform-origin:100% 0">114</div><div class="a" style="left:1039px;top:375px;width:68.5px;text-align:right;font-size:11px;line-height:14px;color:#111;-webkit-text-stroke:0.25px #111;transform:scaleX(.88);transform-origin:100% 0">114</div><div class="a" style="left:1110px;top:375px;width:68.5px;text-align:right;font-size:11px;line-height:14px;color:#111;-webkit-text-stroke:0.25px #111;transform:scaleX(.88);transform-origin:100% 0">115</div><div class="a" style="left:1262.5px;top:375px;font-size:11px;line-height:14px;color:#111;width:2.5px;overflow:hidden">0</div><div class="a" style="left:45px;top:391px;width:69px;text-align:right;font-size:11px;line-height:14px;color:#111;-webkit-text-stroke:0.25px #111;letter-spacing:.33px">28/06/2025</div><div class="a" style="left:117.2px;top:391px;width:71px;text-align:center;font-size:11px;line-height:14px;color:#111;-webkit-text-stroke:0.25px #111;transform:scaleX(0.91)">5,15</div><div class="a" style="left:187.3px;top:391px;width:71px;text-align:center;font-size:11px;line-height:14px;color:#111;-webkit-text-stroke:0.25px #111;transform:scaleX(0.96)">0.00:59:50</div><div class="a" style="left:259.2px;top:391px;width:71px;text-align:center;font-size:11px;line-height:14px;color:#111;-webkit-text-stroke:0.25px #111;transform:scaleX(0.92)">8:29</div><div class="a" style="left:330.2px;top:391px;width:71px;text-align:center;font-size:11px;line-height:14px;color:#111;-webkit-text-stroke:0.25px #111;transform:scaleX(0.92)">9:28</div><div class="a" style="left:400.3px;top:391px;width:71px;text-align:center;font-size:11px;line-height:14px;color:#111;-webkit-text-stroke:0.25px #111;transform:scaleX(0.95)">00:12:11</div><div class="a" style="left:471.3px;top:391px;width:71px;text-align:center;font-size:11px;line-height:14px;color:#111;-webkit-text-stroke:0.25px #111;transform:scaleX(0.95)">00:11:35</div><div class="a" style="left:542.3px;top:391px;width:71px;text-align:center;font-size:11px;line-height:14px;color:#111;-webkit-text-stroke:0.25px #111;transform:scaleX(0.95)">00:11:34</div><div class="a" style="left:613.3px;top:391px;width:71px;text-align:center;font-size:11px;line-height:14px;color:#111;-webkit-text-stroke:0.25px #111;transform:scaleX(0.95)">00:11:23</div><div class="a" style="left:684.3px;top:391px;width:71px;text-align:center;font-size:11px;line-height:14px;color:#111;-webkit-text-stroke:0.25px #111;transform:scaleX(0.95)">00:11:07</div><div class="a" style="left:755.3px;top:391px;width:71px;text-align:center;font-size:11px;line-height:14px;color:#111;-webkit-text-stroke:0.25px #111;transform:scaleX(0.95)">00:02:00</div><div class="a" style="left:826px;top:391px;width:68.5px;text-align:right;font-size:11px;line-height:14px;color:#111;-webkit-text-stroke:0.25px #111;transform:scaleX(.88);transform-origin:100% 0">118</div><div class="a" style="left:897px;top:391px;width:68.5px;text-align:right;font-size:11px;line-height:14px;color:#111;-webkit-text-stroke:0.25px #111;transform:scaleX(.88);transform-origin:100% 0">121</div><div class="a" style="left:968px;top:391px;width:68.5px;text-align:right;font-size:11px;line-height:14px;color:#111;-webkit-text-stroke:0.25px #111;transform:scaleX(.88);transform-origin:100% 0">121</div><div class="a" style="left:1039px;top:391px;width:68.5px;text-align:right;font-size:11px;line-height:14px;color:#111;-webkit-text-stroke:0.25px #111;transform:scaleX(.88);transform-origin:100% 0">121</div><div class="a" style="left:1110px;top:391px;width:68.5px;text-align:right;font-size:11px;line-height:14px;color:#111;-webkit-text-stroke:0.25px #111;transform:scaleX(.88);transform-origin:100% 0">122</div><div class="a" style="left:1181px;top:391px;width:68.5px;text-align:right;font-size:11px;line-height:14px;color:#111;-webkit-text-stroke:0.25px #111;transform:scaleX(.88);transform-origin:100% 0">117</div><div class="a" style="left:1262.5px;top:391px;font-size:11px;line-height:14px;color:#111;width:2.5px;overflow:hidden">0</div><div class="a" style="left:45px;top:407px;width:69px;text-align:right;font-size:11px;line-height:14px;color:#111;-webkit-text-stroke:0.25px #111;letter-spacing:.33px">29/06/2025</div><div class="a" style="left:117.2px;top:407px;width:71px;text-align:center;font-size:11px;line-height:14px;color:#111;-webkit-text-stroke:0.25px #111;transform:scaleX(0.91)">5,60</div><div class="a" style="left:187.3px;top:407px;width:71px;text-align:center;font-size:11px;line-height:14px;color:#111;-webkit-text-stroke:0.25px #111;transform:scaleX(0.96)">0.01:04:40</div><div class="a" style="left:259.2px;top:407px;width:71px;text-align:center;font-size:11px;line-height:14px;color:#111;-webkit-text-stroke:0.25px #111;transform:scaleX(0.92)">8:30</div><div class="a" style="left:330.2px;top:407px;width:71px;text-align:center;font-size:11px;line-height:14px;color:#111;-webkit-text-stroke:0.25px #111;transform:scaleX(0.92)">9:34</div><div class="a" style="left:400.3px;top:407px;width:71px;text-align:center;font-size:11px;line-height:14px;color:#111;-webkit-text-stroke:0.25px #111;transform:scaleX(0.95)">00:11:49</div><div class="a" style="left:471.3px;top:407px;width:71px;text-align:center;font-size:11px;line-height:14px;color:#111;-webkit-text-stroke:0.25px #111;transform:scaleX(0.95)">00:11:35</div><div class="a" style="left:542.3px;top:407px;width:71px;text-align:center;font-size:11px;line-height:14px;color:#111;-webkit-text-stroke:0.25px #111;transform:scaleX(0.95)">00:11:35</div><div class="a" style="left:613.3px;top:407px;width:71px;text-align:center;font-size:11px;line-height:14px;color:#111;-webkit-text-stroke:0.25px #111;transform:scaleX(0.95)">00:11:18</div><div class="a" style="left:684.3px;top:407px;width:71px;text-align:center;font-size:11px;line-height:14px;color:#111;-webkit-text-stroke:0.25px #111;transform:scaleX(0.95)">00:11:27</div><div class="a" style="left:755.3px;top:407px;width:71px;text-align:center;font-size:11px;line-height:14px;color:#111;-webkit-text-stroke:0.25px #111;transform:scaleX(0.95)">00:06:56</div><div class="a" style="left:826px;top:407px;width:68.5px;text-align:right;font-size:11px;line-height:14px;color:#111;-webkit-text-stroke:0.25px #111;transform:scaleX(.88);transform-origin:100% 0">118</div><div class="a" style="left:897px;top:407px;width:68.5px;text-align:right;font-size:11px;line-height:14px;color:#111;-webkit-text-stroke:0.25px #111;transform:scaleX(.88);transform-origin:100% 0">126</div><div class="a" style="left:968px;top:407px;width:68.5px;text-align:right;font-size:11px;line-height:14px;color:#111;-webkit-text-stroke:0.25px #111;transform:scaleX(.88);transform-origin:100% 0">124</div><div class="a" style="left:1039px;top:407px;width:68.5px;text-align:right;font-size:11px;line-height:14px;color:#111;-webkit-text-stroke:0.25px #111;transform:scaleX(.88);transform-origin:100% 0">125</div><div class="a" style="left:1110px;top:407px;width:68.5px;text-align:right;font-size:11px;line-height:14px;color:#111;-webkit-text-stroke:0.25px #111;transform:scaleX(.88);transform-origin:100% 0">126</div><div class="a" style="left:1181px;top:407px;width:68.5px;text-align:right;font-size:11px;line-height:14px;color:#111;-webkit-text-stroke:0.25px #111;transform:scaleX(.88);transform-origin:100% 0">127</div><div class="a" style="left:1262.5px;top:407px;font-size:11px;line-height:14px;color:#111;width:2.5px;overflow:hidden">0</div><div class="a" style="left:45px;top:423px;width:69px;text-align:right;font-size:11px;line-height:14px;color:#111;-webkit-text-stroke:0.25px #111;letter-spacing:.33px">30/06/2025</div><div class="a" style="left:117.2px;top:423px;width:71px;text-align:center;font-size:11px;line-height:14px;color:#111;-webkit-text-stroke:0.25px #111;transform:scaleX(0.91)">5,60</div><div class="a" style="left:187.3px;top:423px;width:71px;text-align:center;font-size:11px;line-height:14px;color:#111;-webkit-text-stroke:0.25px #111;transform:scaleX(0.96)">0.01:05:26</div><div class="a" style="left:259.2px;top:423px;width:71px;text-align:center;font-size:11px;line-height:14px;color:#111;-webkit-text-stroke:0.25px #111;transform:scaleX(0.92)">8:01</div><div class="a" style="left:330.2px;top:423px;width:71px;text-align:center;font-size:11px;line-height:14px;color:#111;-webkit-text-stroke:0.25px #111;transform:scaleX(0.92)">9:06</div><div class="a" style="left:400.3px;top:423px;width:71px;text-align:center;font-size:11px;line-height:14px;color:#111;-webkit-text-stroke:0.25px #111;transform:scaleX(0.95)">00:12:17</div><div class="a" style="left:471.3px;top:423px;width:71px;text-align:center;font-size:11px;line-height:14px;color:#111;-webkit-text-stroke:0.25px #111;transform:scaleX(0.95)">00:11:30</div><div class="a" style="left:542.3px;top:423px;width:71px;text-align:center;font-size:11px;line-height:14px;color:#111;-webkit-text-stroke:0.25px #111;transform:scaleX(0.95)">00:11:22</div><div class="a" style="left:613.3px;top:423px;width:71px;text-align:center;font-size:11px;line-height:14px;color:#111;-webkit-text-stroke:0.25px #111;transform:scaleX(0.95)">00:11:25</div><div class="a" style="left:684.3px;top:423px;width:71px;text-align:center;font-size:11px;line-height:14px;color:#111;-webkit-text-stroke:0.25px #111;transform:scaleX(0.95)">00:11:26</div><div class="a" style="left:755.3px;top:423px;width:71px;text-align:center;font-size:11px;line-height:14px;color:#111;-webkit-text-stroke:0.25px #111;transform:scaleX(0.95)">00:07:26</div><div class="a" style="left:826px;top:423px;width:68.5px;text-align:right;font-size:11px;line-height:14px;color:#111;-webkit-text-stroke:0.25px #111;transform:scaleX(.88);transform-origin:100% 0">115</div><div class="a" style="left:897px;top:423px;width:68.5px;text-align:right;font-size:11px;line-height:14px;color:#111;-webkit-text-stroke:0.25px #111;transform:scaleX(.88);transform-origin:100% 0">125</div><div class="a" style="left:968px;top:423px;width:68.5px;text-align:right;font-size:11px;line-height:14px;color:#111;-webkit-text-stroke:0.25px #111;transform:scaleX(.88);transform-origin:100% 0">127</div><div class="a" style="left:1039px;top:423px;width:68.5px;text-align:right;font-size:11px;line-height:14px;color:#111;-webkit-text-stroke:0.25px #111;transform:scaleX(.88);transform-origin:100% 0">127</div><div class="a" style="left:1110px;top:423px;width:68.5px;text-align:right;font-size:11px;line-height:14px;color:#111;-webkit-text-stroke:0.25px #111;transform:scaleX(.88);transform-origin:100% 0">127</div><div class="a" style="left:1181px;top:423px;width:68.5px;text-align:right;font-size:11px;line-height:14px;color:#111;-webkit-text-stroke:0.25px #111;transform:scaleX(.88);transform-origin:100% 0">128</div><div class="a" style="left:1262.5px;top:423px;font-size:11px;line-height:14px;color:#111;width:2.5px;overflow:hidden">0</div><div class="a" style="left:45px;top:439px;width:69px;text-align:right;font-size:11px;line-height:14px;color:#111;-webkit-text-stroke:0.25px #111;letter-spacing:.33px">03/07/2025</div><div class="a" style="left:117.2px;top:439px;width:71px;text-align:center;font-size:11px;line-height:14px;color:#111;-webkit-text-stroke:0.25px #111;transform:scaleX(0.91)">4,85</div><div class="a" style="left:187.3px;top:439px;width:71px;text-align:center;font-size:11px;line-height:14px;color:#111;-webkit-text-stroke:0.25px #111;transform:scaleX(0.96)">0.01:19:01</div><div class="a" style="left:259.2px;top:439px;width:71px;text-align:center;font-size:11px;line-height:14px;color:#111;-webkit-text-stroke:0.25px #111;transform:scaleX(0.92)">10:41</div><div class="a" style="left:330.2px;top:439px;width:71px;text-align:center;font-size:11px;line-height:14px;color:#111;-webkit-text-stroke:0.25px #111;transform:scaleX(0.92)">12:00</div><div class="a" style="left:400.3px;top:439px;width:71px;text-align:center;font-size:11px;line-height:14px;color:#111;-webkit-text-stroke:0.25px #111;transform:scaleX(0.95)">00:16:17</div><div class="a" style="left:471.3px;top:439px;width:71px;text-align:center;font-size:11px;line-height:14px;color:#111;-webkit-text-stroke:0.25px #111;transform:scaleX(0.95)">00:15:40</div><div class="a" style="left:542.3px;top:439px;width:71px;text-align:center;font-size:11px;line-height:14px;color:#111;-webkit-text-stroke:0.25px #111;transform:scaleX(0.95)">00:16:16</div><div class="a" style="left:613.3px;top:439px;width:71px;text-align:center;font-size:11px;line-height:14px;color:#111;-webkit-text-stroke:0.25px #111;transform:scaleX(0.95)">00:15:19</div><div class="a" style="left:684.3px;top:439px;width:71px;text-align:center;font-size:11px;line-height:14px;color:#111;-webkit-text-stroke:0.25px #111;transform:scaleX(0.95)">00:15:29</div><div class="a" style="left:826px;top:439px;width:68.5px;text-align:right;font-size:11px;line-height:14px;color:#111;-webkit-text-stroke:0.25px #111;transform:scaleX(.88);transform-origin:100% 0">98</div><div class="a" style="left:897px;top:439px;width:68.5px;text-align:right;font-size:11px;line-height:14px;color:#111;-webkit-text-stroke:0.25px #111;transform:scaleX(.88);transform-origin:100% 0">105</div><div class="a" style="left:968px;top:439px;width:68.5px;text-align:right;font-size:11px;line-height:14px;color:#111;-webkit-text-stroke:0.25px #111;transform:scaleX(.88);transform-origin:100% 0">100</div><div class="a" style="left:1039px;top:439px;width:68.5px;text-align:right;font-size:11px;line-height:14px;color:#111;-webkit-text-stroke:0.25px #111;transform:scaleX(.88);transform-origin:100% 0">98</div><div class="a" style="left:1110px;top:439px;width:68.5px;text-align:right;font-size:11px;line-height:14px;color:#111;-webkit-text-stroke:0.25px #111;transform:scaleX(.88);transform-origin:100% 0">105</div><div class="a" style="left:1262.5px;top:439px;font-size:11px;line-height:14px;color:#111;width:2.5px;overflow:hidden">0</div><div class="a" style="left:45px;top:455px;width:69px;text-align:right;font-size:11px;line-height:14px;color:#111;-webkit-text-stroke:0.25px #111;letter-spacing:.33px">04/07/2025</div><div class="a" style="left:117.2px;top:455px;width:71px;text-align:center;font-size:11px;line-height:14px;color:#111;-webkit-text-stroke:0.25px #111;transform:scaleX(0.91)">4,85</div><div class="a" style="left:187.3px;top:455px;width:71px;text-align:center;font-size:11px;line-height:14px;color:#111;-webkit-text-stroke:0.25px #111;transform:scaleX(0.96)">0.01:02:50</div><div class="a" style="left:259.2px;top:455px;width:71px;text-align:center;font-size:11px;line-height:14px;color:#111;-webkit-text-stroke:0.25px #111;transform:scaleX(0.92)">7:40</div><div class="a" style="left:330.2px;top:455px;width:71px;text-align:center;font-size:11px;line-height:14px;color:#111;-webkit-text-stroke:0.25px #111;transform:scaleX(0.92)">8:42</div><div class="a" style="left:400.3px;top:455px;width:71px;text-align:center;font-size:11px;line-height:14px;color:#111;-webkit-text-stroke:0.25px #111;transform:scaleX(0.95)">00:13:26</div><div class="a" style="left:471.3px;top:455px;width:71px;text-align:center;font-size:11px;line-height:14px;color:#111;-webkit-text-stroke:0.25px #111;transform:scaleX(0.95)">00:12:47</div><div class="a" style="left:542.3px;top:455px;width:71px;text-align:center;font-size:11px;line-height:14px;color:#111;-webkit-text-stroke:0.25px #111;transform:scaleX(0.95)">00:12:43</div><div class="a" style="left:613.3px;top:455px;width:71px;text-align:center;font-size:11px;line-height:14px;color:#111;-webkit-text-stroke:0.25px #111;transform:scaleX(0.95)">00:12:52</div><div class="a" style="left:684.3px;top:455px;width:71px;text-align:center;font-size:11px;line-height:14px;color:#111;-webkit-text-stroke:0.25px #111;transform:scaleX(0.95)">00:11:02</div><div class="a" style="left:826px;top:455px;width:68.5px;text-align:right;font-size:11px;line-height:14px;color:#111;-webkit-text-stroke:0.25px #111;transform:scaleX(.88);transform-origin:100% 0">110</div><div class="a" style="left:897px;top:455px;width:68.5px;text-align:right;font-size:11px;line-height:14px;color:#111;-webkit-text-stroke:0.25px #111;transform:scaleX(.88);transform-origin:100% 0">115</div><div class="a" style="left:968px;top:455px;width:68.5px;text-align:right;font-size:11px;line-height:14px;color:#111;-webkit-text-stroke:0.25px #111;transform:scaleX(.88);transform-origin:100% 0">114</div><div class="a" style="left:1039px;top:455px;width:68.5px;text-align:right;font-size:11px;line-height:14px;color:#111;-webkit-text-stroke:0.25px #111;transform:scaleX(.88);transform-origin:100% 0">113</div><div class="a" style="left:1110px;top:455px;width:68.5px;text-align:right;font-size:11px;line-height:14px;color:#111;-webkit-text-stroke:0.25px #111;transform:scaleX(.88);transform-origin:100% 0">114</div><div class="a" style="left:1262.5px;top:455px;font-size:11px;line-height:14px;color:#111;width:2.5px;overflow:hidden">0</div><div class="a" style="left:45px;top:471px;width:69px;text-align:right;font-size:11px;line-height:14px;color:#111;-webkit-text-stroke:0.25px #111;letter-spacing:.33px">05/07/2025</div><div class="a" style="left:117.2px;top:471px;width:71px;text-align:center;font-size:11px;line-height:14px;color:#111;-webkit-text-stroke:0.25px #111;transform:scaleX(0.91)">5,20</div><div class="a" style="left:187.3px;top:471px;width:71px;text-align:center;font-size:11px;line-height:14px;color:#111;-webkit-text-stroke:0.25px #111;transform:scaleX(0.96)">0.01:01:54</div><div class="a" style="left:259.2px;top:471px;width:71px;text-align:center;font-size:11px;line-height:14px;color:#111;-webkit-text-stroke:0.25px #111;transform:scaleX(0.92)">7:45</div><div class="a" style="left:330.2px;top:471px;width:71px;text-align:center;font-size:11px;line-height:14px;color:#111;-webkit-text-stroke:0.25px #111;transform:scaleX(0.92)">8:46</div><div class="a" style="left:400.3px;top:471px;width:71px;text-align:center;font-size:11px;line-height:14px;color:#111;-webkit-text-stroke:0.25px #111;transform:scaleX(0.95)">00:12:25</div><div class="a" style="left:471.3px;top:471px;width:71px;text-align:center;font-size:11px;line-height:14px;color:#111;-webkit-text-stroke:0.25px #111;transform:scaleX(0.95)">00:11:54</div><div class="a" style="left:542.3px;top:471px;width:71px;text-align:center;font-size:11px;line-height:14px;color:#111;-webkit-text-stroke:0.25px #111;transform:scaleX(0.95)">00:11:49</div><div class="a" style="left:613.3px;top:471px;width:71px;text-align:center;font-size:11px;line-height:14px;color:#111;-webkit-text-stroke:0.25px #111;transform:scaleX(0.95)">00:11:41</div><div class="a" style="left:684.3px;top:471px;width:71px;text-align:center;font-size:11px;line-height:14px;color:#111;-webkit-text-stroke:0.25px #111;transform:scaleX(0.95)">00:11:44</div><div class="a" style="left:755.3px;top:471px;width:71px;text-align:center;font-size:11px;line-height:14px;color:#111;-webkit-text-stroke:0.25px #111;transform:scaleX(0.95)">00:02:21</div><div class="a" style="left:826px;top:471px;width:68.5px;text-align:right;font-size:11px;line-height:14px;color:#111;-webkit-text-stroke:0.25px #111;transform:scaleX(.88);transform-origin:100% 0">111</div><div class="a" style="left:897px;top:471px;width:68.5px;text-align:right;font-size:11px;line-height:14px;color:#111;-webkit-text-stroke:0.25px #111;transform:scaleX(.88);transform-origin:100% 0">117</div><div class="a" style="left:968px;top:471px;width:68.5px;text-align:right;font-size:11px;line-height:14px;color:#111;-webkit-text-stroke:0.25px #111;transform:scaleX(.88);transform-origin:100% 0">120</div><div class="a" style="left:1039px;top:471px;width:68.5px;text-align:right;font-size:11px;line-height:14px;color:#111;-webkit-text-stroke:0.25px #111;transform:scaleX(.88);transform-origin:100% 0">120</div><div class="a" style="left:1110px;top:471px;width:68.5px;text-align:right;font-size:11px;line-height:14px;color:#111;-webkit-text-stroke:0.25px #111;transform:scaleX(.88);transform-origin:100% 0">121</div><div class="a" style="left:1181px;top:471px;width:68.5px;text-align:right;font-size:11px;line-height:14px;color:#111;-webkit-text-stroke:0.25px #111;transform:scaleX(.88);transform-origin:100% 0">122</div><div class="a" style="left:1262.5px;top:471px;font-size:11px;line-height:14px;color:#111;width:2.5px;overflow:hidden">0</div><div class="a" style="left:45px;top:487px;width:69px;text-align:right;font-size:11px;line-height:14px;color:#111;-webkit-text-stroke:0.25px #111;letter-spacing:.33px">07/07/2025</div><div class="a" style="left:117.2px;top:487px;width:71px;text-align:center;font-size:11px;line-height:14px;color:#111;-webkit-text-stroke:0.25px #111;transform:scaleX(0.91)">5,10</div><div class="a" style="left:187.3px;top:487px;width:71px;text-align:center;font-size:11px;line-height:14px;color:#111;-webkit-text-stroke:0.25px #111;transform:scaleX(0.96)">0.01:02:34</div><div class="a" style="left:259.2px;top:487px;width:71px;text-align:center;font-size:11px;line-height:14px;color:#111;-webkit-text-stroke:0.25px #111;transform:scaleX(0.92)">9:19</div><div class="a" style="left:330.2px;top:487px;width:71px;text-align:center;font-size:11px;line-height:14px;color:#111;-webkit-text-stroke:0.25px #111;transform:scaleX(0.92)">10:21</div><div class="a" style="left:400.3px;top:487px;width:71px;text-align:center;font-size:11px;line-height:14px;color:#111;-webkit-text-stroke:0.25px #111;transform:scaleX(0.95)">00:12:24</div><div class="a" style="left:471.3px;top:487px;width:71px;text-align:center;font-size:11px;line-height:14px;color:#111;-webkit-text-stroke:0.25px #111;transform:scaleX(0.95)">00:12:26</div><div class="a" style="left:542.3px;top:487px;width:71px;text-align:center;font-size:11px;line-height:14px;color:#111;-webkit-text-stroke:0.25px #111;transform:scaleX(0.95)">00:12:19</div><div class="a" style="left:613.3px;top:487px;width:71px;text-align:center;font-size:11px;line-height:14px;color:#111;-webkit-text-stroke:0.25px #111;transform:scaleX(0.95)">00:12:05</div><div class="a" style="left:684.3px;top:487px;width:71px;text-align:center;font-size:11px;line-height:14px;color:#111;-webkit-text-stroke:0.25px #111;transform:scaleX(0.95)">00:12:02</div><div class="a" style="left:755.3px;top:487px;width:71px;text-align:center;font-size:11px;line-height:14px;color:#111;-webkit-text-stroke:0.25px #111;transform:scaleX(0.95)">00:01:18</div><div class="a" style="left:826px;top:487px;width:68.5px;text-align:right;font-size:11px;line-height:14px;color:#111;-webkit-text-stroke:0.25px #111;transform:scaleX(.88);transform-origin:100% 0">112</div><div class="a" style="left:897px;top:487px;width:68.5px;text-align:right;font-size:11px;line-height:14px;color:#111;-webkit-text-stroke:0.25px #111;transform:scaleX(.88);transform-origin:100% 0">113</div><div class="a" style="left:968px;top:487px;width:68.5px;text-align:right;font-size:11px;line-height:14px;color:#111;-webkit-text-stroke:0.25px #111;transform:scaleX(.88);transform-origin:100% 0">115</div><div class="a" style="left:1039px;top:487px;width:68.5px;text-align:right;font-size:11px;line-height:14px;color:#111;-webkit-text-stroke:0.25px #111;transform:scaleX(.88);transform-origin:100% 0">116</div><div class="a" style="left:1110px;top:487px;width:68.5px;text-align:right;font-size:11px;line-height:14px;color:#111;-webkit-text-stroke:0.25px #111;transform:scaleX(.88);transform-origin:100% 0">118</div><div class="a" style="left:1181px;top:487px;width:68.5px;text-align:right;font-size:11px;line-height:14px;color:#111;-webkit-text-stroke:0.25px #111;transform:scaleX(.88);transform-origin:100% 0">120</div><div class="a" style="left:1262.5px;top:487px;font-size:11px;line-height:14px;color:#111;width:2.5px;overflow:hidden">0</div><div class="a" style="left:45px;top:503px;width:69px;text-align:right;font-size:11px;line-height:14px;color:#111;-webkit-text-stroke:0.25px #111;letter-spacing:.33px">28/01/2022</div><div class="a" style="left:117.2px;top:503px;width:71px;text-align:center;font-size:11px;line-height:14px;color:#111;-webkit-text-stroke:0.25px #111;transform:scaleX(0.91)">2,60</div><div class="a" style="left:187.3px;top:503px;width:71px;text-align:center;font-size:11px;line-height:14px;color:#111;-webkit-text-stroke:0.25px #111;transform:scaleX(0.96)">0.00:25:39</div><div class="a" style="left:400.3px;top:503px;width:71px;text-align:center;font-size:11px;line-height:14px;color:#111;-webkit-text-stroke:0.25px #111;transform:scaleX(0.95)">00:12:56</div><div class="a" style="left:471.3px;top:503px;width:71px;text-align:center;font-size:11px;line-height:14px;color:#111;-webkit-text-stroke:0.25px #111;transform:scaleX(0.95)">00:12:43</div><div class="a" style="left:826px;top:503px;width:68.5px;text-align:right;font-size:11px;line-height:14px;color:#111;-webkit-text-stroke:0.25px #111;transform:scaleX(.88);transform-origin:100% 0">2</div><div class="a" style="left:897px;top:503px;width:68.5px;text-align:right;font-size:11px;line-height:14px;color:#111;-webkit-text-stroke:0.25px #111;transform:scaleX(.88);transform-origin:100% 0">2</div><div class="a" style="left:968px;top:503px;width:68.5px;text-align:right;font-size:11px;line-height:14px;color:#111;-webkit-text-stroke:0.25px #111;transform:scaleX(.88);transform-origin:100% 0">2</div><div class="a" style="left:1039px;top:503px;width:68.5px;text-align:right;font-size:11px;line-height:14px;color:#111;-webkit-text-stroke:0.25px #111;transform:scaleX(.88);transform-origin:100% 0">2</div><div class="a" style="left:1110px;top:503px;width:68.5px;text-align:right;font-size:11px;line-height:14px;color:#111;-webkit-text-stroke:0.25px #111;transform:scaleX(.88);transform-origin:100% 0">2</div><div class="a" style="left:1181px;top:503px;width:68.5px;text-align:right;font-size:11px;line-height:14px;color:#111;-webkit-text-stroke:0.25px #111;transform:scaleX(.88);transform-origin:100% 0">2</div><div class="a" style="left:1262.5px;top:503px;font-size:11px;line-height:14px;color:#111;width:2.5px;overflow:hidden">0</div><div class="a" style="left:45px;top:519px;width:69px;text-align:right;font-size:11px;line-height:14px;color:#111;-webkit-text-stroke:0.25px #111;letter-spacing:.33px">01/02/2022</div><div class="a" style="left:117.2px;top:519px;width:71px;text-align:center;font-size:11px;line-height:14px;color:#111;-webkit-text-stroke:0.25px #111;transform:scaleX(0.91)">2,60</div><div class="a" style="left:187.3px;top:519px;width:71px;text-align:center;font-size:11px;line-height:14px;color:#111;-webkit-text-stroke:0.25px #111;transform:scaleX(0.96)">0.00:26:38</div><div class="a" style="left:400.3px;top:519px;width:71px;text-align:center;font-size:11px;line-height:14px;color:#111;-webkit-text-stroke:0.25px #111;transform:scaleX(0.95)">00:13:19</div><div class="a" style="left:471.3px;top:519px;width:71px;text-align:center;font-size:11px;line-height:14px;color:#111;-webkit-text-stroke:0.25px #111;transform:scaleX(0.95)">00:13:19</div><div class="a" style="left:826px;top:519px;width:68.5px;text-align:right;font-size:11px;line-height:14px;color:#111;-webkit-text-stroke:0.25px #111;transform:scaleX(.88);transform-origin:100% 0">2</div><div class="a" style="left:897px;top:519px;width:68.5px;text-align:right;font-size:11px;line-height:14px;color:#111;-webkit-text-stroke:0.25px #111;transform:scaleX(.88);transform-origin:100% 0">2</div><div class="a" style="left:968px;top:519px;width:68.5px;text-align:right;font-size:11px;line-height:14px;color:#111;-webkit-text-stroke:0.25px #111;transform:scaleX(.88);transform-origin:100% 0">2</div><div class="a" style="left:1039px;top:519px;width:68.5px;text-align:right;font-size:11px;line-height:14px;color:#111;-webkit-text-stroke:0.25px #111;transform:scaleX(.88);transform-origin:100% 0">2</div><div class="a" style="left:1110px;top:519px;width:68.5px;text-align:right;font-size:11px;line-height:14px;color:#111;-webkit-text-stroke:0.25px #111;transform:scaleX(.88);transform-origin:100% 0">2</div><div class="a" style="left:1181px;top:519px;width:68.5px;text-align:right;font-size:11px;line-height:14px;color:#111;-webkit-text-stroke:0.25px #111;transform:scaleX(.88);transform-origin:100% 0">2</div><div class="a" style="left:1262.5px;top:519px;font-size:11px;line-height:14px;color:#111;width:2.5px;overflow:hidden">0</div><div class="a" style="left:399px;top:389px;width:74px;height:17px;background:transparent;border:2px solid #157a43;"></div><div class="a" style="left:468.5px;top:402.5px;width:6px;height:6px;background:#157a43;border:1px solid #fff;"></div><div class="a" style="left:1265px;top:189.5px;width:15px;height:482px;background:#fafafa;border-left:1px solid #e2e2e2;"></div><div class="a" style="left:1269px;top:294px;width:8.5px;height:375px;background:#b8b8b8;border-radius:4.5px;"></div><div class="a" style="left:0px;top:671px;width:1265px;height:1px;background:#e3e3e3;"></div><div class="a" style="left:0px;top:672px;width:1265px;height:14px;background:#f9f9f9;"></div><div class="a" style="left:2px;top:675px;width:559px;height:9px;background:#b9b9b9;border-radius:4.5px;"></div><div class="a" style="left:1262px;top:672px;width:1px;height:14px;background:#d8d8d8;"></div><div class="a" style="left:0px;top:686px;width:1280px;height:1px;background:#cdcdcd;"></div><div class="a" style="left:0px;top:687px;width:1280px;height:25px;background:#ececec;"></div><svg class="a" style="left:13px;top:694.5px;" width="10" height="11" viewBox="0 0 10 11"><path d="M8 1L1.5 5.5 8 10z" fill="#bbb"/></svg><svg class="a" style="left:37.5px;top:694.5px;" width="10" height="11" viewBox="0 0 10 11"><path d="M2 1l6.5 4.5L2 10z" fill="#bbb"/></svg><div class="a" style="left:60px;top:687px;width:1px;height:22px;background:#d0d0d0;"></div><div class="a" id="t48" style="left:78.03px;top:692.38px;font-size:12.50px;color:#444;font-weight:400;line-height:1;transform:scaleX(0.9721);transform-origin:0 0;">Feuil3 (Tableau)</div><div class="a" style="left:184px;top:685px;width:78px;height:23px;background:#fff;border-radius:0 0 4px 4px;box-shadow:0 1px 1px rgba(0,0,0,.25);"></div><div class="a" id="t49" style="left:214.00px;top:692.38px;font-size:12.50px;color:#1b7d4a;font-weight:700;line-height:1;transform:scaleX(0.9816);transform-origin:0 0;">PQ</div><svg class="a" style="left:275px;top:692px;" width="15" height="15" viewBox="0 0 15 15"><path d="M7.5 1v13M1 7.5h13" stroke="#333" stroke-width="2"/></svg><div class="a" style="left:300.5px;top:687px;width:1px;height:22px;background:#d6d6d6;"></div><div class="a" style="left:0px;top:712px;width:1280px;height:1px;background:#a9a9a9;"></div><div class="a" style="left:0px;top:713px;width:1280px;height:22px;background:linear-gradient(#e2e2e2,#cbcbcb);border-radius:0 0 6px 6px;"></div><div class="a" id="t50" style="left:23.40px;top:717.58px;font-size:12.50px;color:#555;font-weight:400;line-height:1;transform:scaleX(1.0021);transform-origin:0 0;">Prêt</div><div class="a" id="t51" style="left:67.18px;top:717.58px;font-size:12.50px;color:#555;font-weight:400;line-height:1;transform:scaleX(1.0181);transform-origin:0 0;">Exécution de la requête en arrière-plan ... (Cliquez ici pour annuler)</div><svg class="a" style="left:467px;top:716px;" width="18" height="15" viewBox="0 0 18 15"><circle cx="3.5" cy="2.5" r="2" fill="#555"/><path d="M3.5 4v9.5h3M3.5 13.5h-2M8 2.5h7.5v11H12" fill="none" stroke="#555" stroke-width="1.3"/></svg><svg class="a" style="left:503px;top:715px;" width="18" height="17" viewBox="0 0 18 17"><circle cx="7" cy="2.8" r="1.8" fill="none" stroke="#666" stroke-width="1"/><path d="M1 6.5l6 1.5 6-1.5M7 8v3l-3 5M7 11l3 4" fill="none" stroke="#666" stroke-width="1.1"/><path d="M10 11l6 5M16 11l-6 5" stroke="#666" stroke-width="1.1"/></svg><div class="a" id="t52" style="left:522.70px;top:717.58px;font-size:12.50px;color:#555;font-weight:400;line-height:1;transform:scaleX(1.0197);transform-origin:0 0;">Accessibilité : consultez nos recommandations</div><div class="a" style="left:958px;top:713px;width:36.5px;height:22px;background:#b0b0b0;"></div><svg class="a" style="left:969px;top:716px;" width="16" height="16" viewBox="0 0 16 16"><g fill="#fff"><rect x="1" y="1" width="3.5" height="3" /><rect x="6" y="1" width="3.5" height="3"/><rect x="11" y="1" width="3.5" height="3"/><rect x="1" y="5.8" width="3.5" height="3"/><rect x="6" y="5.8" width="3.5" height="3"/><rect x="11" y="5.8" width="3.5" height="3"/><rect x="1" y="10.6" width="3.5" height="3"/><rect x="6" y="10.6" width="3.5" height="3"/><rect x="11" y="10.6" width="3.5" height="3"/></g></svg><svg class="a" style="left:1004px;top:716px;" width="16" height="16" viewBox="0 0 16 16"><rect x="1.5" y="1.5" width="13" height="12" fill="none" stroke="#555" stroke-width="1.1"/><rect x="4" y="4" width="8" height="7" fill="none" stroke="#555" stroke-width="1"/><path d="M5.5 6h5M5.5 7.5h5M5.5 9h5" stroke="#555" stroke-width=".8"/></svg><svg class="a" style="left:1040px;top:716px;" width="16" height="16" viewBox="0 0 16 16"><path d="M1.5 13.5v-12h13v12M6.5 1.5v6h8M1.5 13.5h13" fill="none" stroke="#555" stroke-width="1.1"/></svg><div class="a" style="left:1073px;top:723px;width:8px;height:1.6px;background:#555;"></div><div class="a" style="left:1090px;top:722px;width:98px;height:3px;background:#9a9a9a;border-radius:2px;"></div><svg class="a" style="left:1131px;top:716px;" width="16" height="16" viewBox="0 0 16 16"><circle cx="8" cy="8" r="6.3" fill="#fff" stroke="#bbb" stroke-width=".8"/></svg><svg class="a" style="left:1195px;top:718px;" width="11" height="11" viewBox="0 0 11 11"><path d="M5.5 1v9M1 5.5h9" stroke="#555" stroke-width="1.7"/></svg><div class="a" id="t53" style="left:1221.00px;top:717.58px;font-size:12.50px;color:#555;font-weight:400;line-height:1;transform:scaleX(0.9907);transform-origin:0 0;">100 %</div><div class="a" style="left:82px;top:735px;width:1116px;height:65px;background:linear-gradient(90deg,#8b7a6b 0%,#857a6e 6%,#7f7d74 14%,#84857f 30%,#828680 45%,#858781 55%,#8a8278 68%,#868580 76%,#7e8883 86%,#8c8276 90%,#a0705a 94%,#b0644a 100%);border-radius:5px 5px 0 0;"></div><svg class="a" style="left:93px;top:746px;" width="40" height="39" viewBox="0 0 40 39"><defs><linearGradient id="fa" x1="0" y1="0" x2="0" y2="1"><stop offset="0" stop-color="#1ed0fb"/><stop offset="1" stop-color="#1a7ef0"/></linearGradient></defs><rect x="0" y="0" width="40" height="38" rx="2" fill="url(#fa)"/><path d="M20 0h18a2 2 0 0 1 2 2v34a2 2 0 0 1-2 2H23c-1-5-2-10-1-16h-5c1-8 2-15 3-22z" fill="#eef2f8"/><path d="M8 24c6 5 18 5 25 0" fill="none" stroke="#111" stroke-width="1.4"/><path d="M11 11v4M29 11v4" stroke="#111" stroke-width="1.4"/></svg><div class="a" style="left:111px;top:794px;width:4px;height:4px;background:#111;border-radius:2px;"></div><svg class="a" style="left:144px;top:744px;" width="43" height="43" viewBox="0 0 43 43"><defs><linearGradient id="lp" x1="0" y1="0" x2="0" y2="1"><stop offset="0" stop-color="#c8cbd0"/><stop offset="1" stop-color="#6d7177"/></linearGradient></defs><circle cx="21.5" cy="21.5" r="20.5" fill="url(#lp)" stroke="#e0e0e0" stroke-width="1"/><path d="M33 9c-7 1-12 5-16 11l-6 1-4 4 6 1-2 5 4 1 4-3 1 5 4-4 0-6c6-4 9-9 9-15z" fill="#3e3e40"/><circle cx="26" cy="16" r="2" fill="#aaa"/></svg><svg class="a" style="left:197px;top:744px;" width="43" height="43" viewBox="0 0 43 43"><defs><linearGradient id="sf" x1="0" y1="0" x2="0" y2="1"><stop offset="0" stop-color="#3fc0fb"/><stop offset="1" stop-color="#1a5fd8"/></linearGradient></defs><circle cx="21.5" cy="21.5" r="20.5" fill="#f4f4f4"/><circle cx="21.5" cy="21.5" r="18" fill="url(#sf)"/><g stroke="#fff" stroke-width=".6" opacity=".7"><path d="M21.5 4v3M21.5 36v3M4 21.5h3M36 21.5h3"/></g><path d="M32 11L19.5 19.5 11 32l12.5-8.5z" fill="#fff"/><path d="M32 11L19.5 19.5l4 4z" fill="#f0443a"/></svg><svg class="a" style="left:250px;top:745px;" width="41" height="41" viewBox="0 0 41 41"><defs><radialGradient id="ff" cx="55%" cy="35%" r="70%"><stop offset="0" stop-color="#ffe14a"/><stop offset=".45" stop-color="#ff7139"/><stop offset="1" stop-color="#e31587"/></radialGradient></defs><rect x="0" y="0" width="41" height="41" rx="9" fill="#20123a"/><path d="M20.5 36c-8 0-14-6-14-14 0-4 1.5-7 3-9 0 3 1 4 2 5 1-4 4-7 6-9 0 3 2 4 4 5 6 2 10 6 10 11 0 6-5 11-11 11z" fill="url(#ff)"/><circle cx="20.5" cy="23" r="7" fill="#7542e5"/><path d="M13 20c2-3 6-4 9-3-3 1-5 3-5 6z" fill="#ff9640"/></svg><div class="a" style="left:269px;top:794px;width:4px;height:4px;background:#111;border-radius:2px;"></div><svg class="a" style="left:304px;top:744px;" width="44" height="44" viewBox="0 0 44 44"><g transform="rotate(-8 22 22)"><rect x="6" y="3" width="30" height="38" fill="#fff"/><rect x="8.5" y="5.5" width="25" height="33" fill="#5fa8ec"/><rect x="8.5" y="25" width="25" height="13.5" fill="#9cc8f2"/><path d="M11 14c5 1 9 4 12 9 3 1 6 4 8 8-4-2-7-3-10-3-3-4-6-8-10-14z" fill="#7a5a3a"/><path d="M17 18l3 3-2 1z" fill="#e8e0d0"/></g><circle cx="31" cy="33" r="7.5" fill="none" stroke="#666" stroke-width="1" opacity=".8"/><circle cx="31" cy="33" r="5" fill="none" stroke="#666" stroke-width=".7" opacity=".6"/></svg><svg class="a" style="left:355px;top:745px;" width="44" height="44" viewBox="0 0 44 44"><defs><linearGradient id="ft" x1="0" y1="0" x2="0" y2="1"><stop offset="0" stop-color="#5ef275"/><stop offset="1" stop-color="#1bc23e"/></linearGradient></defs><rect x="1" y="2" width="38" height="35" rx="8" fill="url(#ft)"/><rect x="6" y="11" width="17" height="15" rx="3" fill="#f2f2f2"/><path d="M24 17l6-4v12l-6-4z" fill="#f2f2f2"/><circle cx="32" cy="33" r="9.5" fill="#f4f4f4" stroke="#d8d8d8" stroke-width=".6"/><path d="M28 28.5c.8 4.5 3.5 7.3 8 8l1.5-2-2.3-1.6-1.2 1c-1.7-.9-2.8-2.1-3.4-3.5l1.1-1-1.5-2.4z" fill="#23c744"/></svg><svg class="a" style="left:408px;top:744px;" width="44" height="44" viewBox="0 0 44 44"><g transform="rotate(-6 20 22)"><rect x="3" y="3" width="33" height="37" rx="2" fill="#f6f3ea"/><path d="M20 3h16v20c-5-3-10-8-16-20z" fill="#a8d890"/><path d="M3 20c6 2 10 6 12 20H3z" fill="#f3c7d3"/><path d="M11 3v37" stroke="#4da0f5" stroke-width="3"/><path d="M5 28l30-6" stroke="#f6cd5a" stroke-width="2.5"/><circle cx="11" cy="28" r="4.5" fill="#1a6ff0"/><path d="M9 31l2-6 2 6-2-1.5z" fill="#fff"/></g><circle cx="33" cy="32" r="9" fill="#fafafa" stroke="#ccc" stroke-width=".8"/><circle cx="33" cy="32" r="5.5" fill="none" stroke="#999" stroke-width=".8"/><text x="33" y="34.5" font-size="6.5" text-anchor="middle" font-family="Liberation Sans" fill="#555">3D</text><path d="M33 22.5l1 1.5h-2z" fill="#e8453c"/></svg><svg class="a" style="left:462px;top:744px;" width="43" height="43" viewBox="0 0 43 43"><circle cx="21.5" cy="21.5" r="20.5" fill="#f6f6f6" stroke="#ddd" stroke-width=".7"/><ellipse cx="21.5" cy="12.5" rx="5.2" ry="8.5" fill="#f5a623" opacity=".82" transform="rotate(0 21.5 21.5)"/><ellipse cx="21.5" cy="12.5" rx="5.2" ry="8.5" fill="#f8d21c" opacity=".82" transform="rotate(45 21.5 21.5)"/><ellipse cx="21.5" cy="12.5" rx="5.2" ry="8.5" fill="#8fd14f" opacity=".82" transform="rotate(90 21.5 21.5)"/><ellipse cx="21.5" cy="12.5" rx="5.2" ry="8.5" fill="#4fc3a8" opacity=".82" transform="rotate(135 21.5 21.5)"/><ellipse cx="21.5" cy="12.5" rx="5.2" ry="8.5" fill="#4aa3e2" opacity=".82" transform="rotate(180 21.5 21.5)"/><ellipse cx="21.5" cy="12.5" rx="5.2" ry="8.5" fill="#7b6fd8" opacity=".82" transform="rotate(225 21.5 21.5)"/><ellipse cx="21.5" cy="12.5" rx="5.2" ry="8.5" fill="#d55bb0" opacity=".82" transform="rotate(270 21.5 21.5)"/><ellipse cx="21.5" cy="12.5" rx="5.2" ry="8.5" fill="#ef5a4a" opacity=".82" transform="rotate(315 21.5 21.5)"/></svg><svg class="a" style="left:515px;top:742px;" width="44" height="46" viewBox="0 0 44 46"><rect x="2" y="2" width="36" height="42" rx="3" fill="#b8874f" transform="rotate(-5 20 23)"/><g transform="rotate(-5 20 23)"><rect x="37" y="6" width="3" height="8" fill="#e8e8e8"/><rect x="37" y="14" width="3" height="7" fill="#4fc0e8"/><rect x="37" y="21" width="3" height="7" fill="#40c080"/><rect x="37" y="28" width="3" height="7" fill="#f0a030"/><circle cx="19" cy="21" r="10" fill="none" stroke="#a0763f" stroke-width="1"/><circle cx="19" cy="18" r="3.5" fill="#a0763f"/><path d="M12 27c2-4 12-4 14 0-3 3-11 3-14 0z" fill="#a0763f"/></g></svg><svg class="a" style="left:568px;top:744px;" width="43" height="44" viewBox="0 0 43 44"><g transform="rotate(-3 21 22)"><rect x="4" y="5" width="36" height="37" rx="2" fill="#8a9096"/><rect x="3" y="3" width="35" height="36" rx="2" fill="#fafafa"/><rect x="3" y="3" width="35" height="10" rx="2" fill="#e9453f"/><text x="20.5" y="11.5" font-size="7.5" text-anchor="middle" font-family="Liberation Sans" font-weight="700" fill="#fff">OCT.</text><text x="20.5" y="34" font-size="19" text-anchor="middle" font-family="Liberation Sans" fill="#222">21</text></g></svg><svg class="a" style="left:621px;top:743px;" width="44" height="45" viewBox="0 0 44 45"><g transform="rotate(-6 22 22)"><rect x="5" y="3" width="33" height="39" rx="4" fill="#fdfdfd" stroke="#333" stroke-width=".6"/><circle cx="11.5" cy="11" r="2.3" fill="#2b7ff0"/><circle cx="11.5" cy="19" r="2.3" fill="#e8453c"/><circle cx="11.5" cy="27" r="2.3" fill="#f09a36"/><circle cx="11.5" cy="35" r="2.3" fill="#4a5560"/><path d="M16 11h18M16 19h18M16 27h18M16 35h18" stroke="#ccc" stroke-width="1"/></g></svg><svg class="a" style="left:673px;top:743px;" width="44" height="45" viewBox="0 0 44 45"><g transform="rotate(-6 22 22)"><rect x="5" y="3" width="34" height="39" rx="1.5" fill="#fcfaf0" stroke="#d8c890" stroke-width=".6"/><rect x="5" y="3" width="34" height="8" fill="#f6cf4c"/><path d="M7 15h30M7 19h30M7 23h30M7 27h30M7 31h30M7 35h30M7 39h30" stroke="#dedbd0" stroke-width=".8"/></g></svg><svg class="a" style="left:727px;top:744px;" width="43" height="43" viewBox="0 0 43 43"><defs><linearGradient id="pd" x1="0" y1="0" x2="0" y2="1"><stop offset="0" stop-color="#d36ef5"/><stop offset="1" stop-color="#8434c8"/></linearGradient></defs><circle cx="21.5" cy="21.5" r="20.5" fill="url(#pd)"/><circle cx="21.5" cy="18.5" r="3.5" fill="#fff"/><rect x="19" y="24" width="5" height="12" rx="2.5" fill="#fff"/><path d="M15 27a9 9 0 1 1 13 0M11 31a14 14 0 1 1 21 0" fill="none" stroke="#fff" stroke-width="1.8"/></svg><svg class="a" style="left:780px;top:744px;" width="43" height="43" viewBox="0 0 43 43"><circle cx="21.5" cy="21.5" r="20.5" fill="#111"/><path d="M14.5 17.5c.9 0 1.8.6 2.3.6s1.4-.6 2.3-.6c.6 0 1.6.3 2.2 1.2-1.7 1-1.5 3.5.3 4.2-.4 1.1-1.3 2.8-2.3 2.8-.8 0-1-.5-2-.5s-1.3.5-2 .5c-1.4 0-3-2.8-3-5 0-2 1.3-3.2 2.2-3.2zM17 16.8c0-.9.6-1.8 1.5-2 .1.9-.5 1.9-1.5 2z" fill="#fff"/><text x="23" y="25.5" font-size="12" font-family="Liberation Sans" fill="#fff">tv</text></svg><svg class="a" style="left:833px;top:744px;" width="43" height="43" viewBox="0 0 43 43"><defs><linearGradient id="as" x1="0" y1="0" x2="0" y2="1"><stop offset="0" stop-color="#1fbdfc"/><stop offset="1" stop-color="#1a63ee"/></linearGradient></defs><circle cx="21.5" cy="21.5" r="20.5" fill="url(#as)"/><path d="M17.5 10l10.5 19M25.5 10L14.5 29M10 25h23" stroke="#fff" stroke-width="2.6" stroke-linecap="round"/></svg><svg class="a" style="left:885px;top:745px;" width="44" height="42" viewBox="0 0 44 42"><defs><linearGradient id="spg" x1="0" y1="0" x2="0" y2="1"><stop offset="0" stop-color="#b8bcc2"/><stop offset="1" stop-color="#8a8e94"/></linearGradient></defs><rect x="1" y="1" width="42" height="40" rx="2" fill="url(#spg)"/><circle cx="22" cy="21" r="17" fill="#3a3a3c"/><circle cx="22" cy="21" r="15.5" fill="none" stroke="#c8c8c8" stroke-width="2.5" stroke-dasharray="2 1.6"/><circle cx="22" cy="21" r="12" fill="#6a6a6c" stroke="#999" stroke-width="1"/><path d="M22 21V9.5M22 21l-10 5.5M22 21l10 5.5" stroke="#d0d0d0" stroke-width="3"/><circle cx="22" cy="21" r="3" fill="#888"/></svg><svg class="a" style="left:938px;top:743px;" width="45" height="45" viewBox="0 0 45 45"><circle cx="22.5" cy="22.5" r="21.5" fill="#fff"/><circle cx="22.5" cy="22.5" r="18.5" fill="none" stroke="#1a6ec0" stroke-width="4"/><text x="22.5" y="21" font-size="8.5" text-anchor="middle" font-family="Liberation Serif" font-style="italic" font-weight="700" fill="#1a6ec0">OSCAR</text><path d="M9 27c2 0 2-4 4-4s1 7 3 7 2-7 4-7 1 7 3 7 2-7 4-7 1 7 3 7 2-4 4-4" fill="none" stroke="#b05050" stroke-width=".9"/></svg><div class="a" style="left:999.5px;top:744px;width:1px;height:38px;background:rgba(40,40,40,.55);"></div><svg class="a" style="left:1017px;top:745px;" width="41" height="41" viewBox="0 0 41 41"><rect x="0.5" y="0.5" width="40" height="40" rx="9" fill="#fff"/><rect x="11" y="7" width="23" height="26" rx="2" fill="#21a366"/><rect x="11" y="7" width="23" height="7" fill="#33c481"/><rect x="11" y="20" width="23" height="7" fill="#107c41"/><rect x="11" y="27" width="23" height="6" fill="#185c37"/><rect x="5" y="12" width="15" height="15" rx="1.5" fill="#107c41"/><text x="12.5" y="24" font-size="11" text-anchor="middle" font-family="Liberation Sans" fill="#fff">X</text></svg><div class="a" style="left:1034px;top:794px;width:4px;height:4px;background:#111;border-radius:2px;"></div><svg class="a" style="left:1070px;top:745px;" width="41" height="41" viewBox="0 0 41 41"><rect x="0.5" y="0.5" width="40" height="40" rx="9" fill="#c1070d"/><path d="M19 9c-2 0-2 3 0 8s6 11 10 13c3 1 4-1 2-2-4-2-13-1-18 3-2 2-1 3 1 2 3-2 6-9 6-15 0-3-0-9-1-9z" fill="none" stroke="#fff" stroke-width="2"/></svg><div class="a" style="left:1129.5px;top:744px;width:1px;height:38px;background:rgba(40,40,40,.55);"></div><svg class="a" style="left:1149px;top:744px;" width="38" height="44" viewBox="0 0 38 44"><defs><linearGradient id="tr" x1="0" y1="0" x2="1" y2="0"><stop offset="0" stop-color="#d8dadc"/><stop offset=".5" stop-color="#f2f3f4"/><stop offset="1" stop-color="#cfd1d3"/></linearGradient></defs><path d="M3 8h32l-3.5 33c-.2 1.5-1.5 2-3 2H9.5c-1.5 0-2.8-.5-3-2z" fill="url(#tr)" opacity=".95"/><ellipse cx="19" cy="8" rx="16" ry="3.5" fill="#eceeef" stroke="#c0c0c0" stroke-width=".8"/><path d="M8 7l3-4 4 3 3-3 4 2 4-2 4 4" fill="none" stroke="#4a5a70" stroke-width="2.2"/><path d="M13 6l2-2 3 2M22 5l3-1 2 2" stroke="#c04040" stroke-width="1.2" fill="none"/></svg><div class="a" style="left:430px;top:164px;width:420px;height:151px;border-radius:6px;background:#ececec;box-shadow:0 18px 40px rgba(0,0,0,.38),0 2px 8px rgba(0,0,0,.2),0 0 0 1px rgba(0,0,0,.12);overflow:hidden"><div class="a" style="left:0;top:0;width:420px;height:21px;background:linear-gradient(#e8e8e8,#d6d6d6);border-bottom:1px solid #b9b9b9"></div></div><svg class="a" style="left:459px;top:207px;" width="54" height="54" viewBox="0 0 54 54"><rect x="1.5" y="1.5" width="51" height="51" rx="12" fill="#fff"/><rect x="15" y="10" width="29" height="34" rx="1.5" fill="#21a366"/><rect x="29" y="10" width="15" height="8.5" fill="#33c481"/><rect x="15" y="27" width="29" height="8.5" fill="#107c41"/><rect x="15" y="35.5" width="29" height="8.5" rx="1" fill="#185c37"/><rect x="6" y="18" width="19.5" height="19.5" rx="1.5" fill="#107c41"/><text x="15.75" y="32.5" font-size="14" text-anchor="middle" font-family="Liberation Sans" fill="#fff">X</text></svg><div class="a" id="t54" style="left:536.40px;top:203.85px;font-size:13.00px;color:#222;font-weight:700;line-height:1;transform:scaleX(1.0678);transform-origin:0 0;">Alerte</div><div class="a" id="t55" style="left:536.40px;top:227.72px;font-size:11.50px;color:#333;font-weight:400;line-height:1;transform:scaleX(1.0196);transform-origin:0 0;">[Expression.Error] Désolé... Nous n&#x27;avons pas trouvé</div><div class="a" id="t56" style="left:536.40px;top:241.53px;font-size:11.50px;color:#333;font-weight:400;line-height:1;transform:scaleX(1.0324);transform-origin:0 0;">la colonne « Instant T » de la table.</div><div class="a" style="left:751px;top:276px;width:79px;height:21px;background:linear-gradient(#6cabf8,#1a6ef6);border-radius:5px;box-shadow:0 .5px 1px rgba(0,0,0,.25);"></div><div class="a" style="left:751px;top:279px;width:79px;text-align:center;font-size:13px;line-height:15px;color:#fff">OK</div></body></html>
